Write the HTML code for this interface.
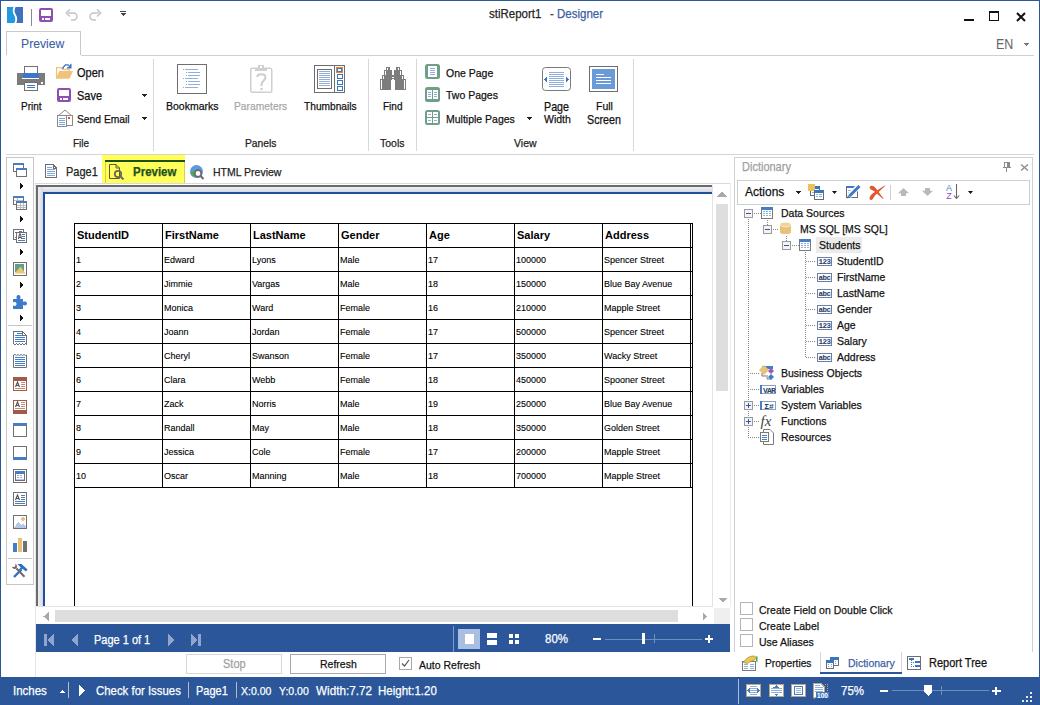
<!DOCTYPE html><html><head><meta charset="utf-8"><style>
html,body{margin:0;padding:0;}
body{width:1040px;height:705px;position:relative;overflow:hidden;background:#fff;font-family:"Liberation Sans",sans-serif;}
.t{position:absolute;white-space:pre;line-height:1;-webkit-text-stroke:0.25px currentColor;}
svg{display:block}
</style></head><body>
<div style="position:absolute;left:0px;top:0px;width:1040px;height:1px;background:#2b579a"></div>
<div style="position:absolute;left:0px;top:0px;width:1px;height:705px;background:#2b579a"></div>
<div style="position:absolute;left:1039px;top:0px;width:1px;height:705px;background:#2b579a"></div>
<svg style="position:absolute;left:7px;top:7px;" width="16" height="16" viewBox="0 0 16 16"><rect x="0" y="0" width="16" height="16" fill="#2399e0"/><path d="M8 0 H16 V16 H8.5 C11 13 10.5 11 9 8.5 C7.5 6 6.5 3 8 0 Z" fill="#3f72ba"/><path d="M7.8 -0.5 C6.2 2.5 6.2 5 7.8 7.5 C9.6 10.5 10 13 8 16.5" stroke="#fff" stroke-width="1.8" fill="none"/></svg>
<div style="position:absolute;left:31px;top:9px;width:1px;height:17px;background:#8a8a8a"></div>
<svg style="position:absolute;left:39px;top:8px;" width="14" height="14" viewBox="0 0 14 14" shape-rendering="crispEdges"><rect x="0" y="0" width="14" height="14" rx="2" fill="#8e4fb4" shape-rendering="auto"/><rect x="2" y="2" width="10" height="6" fill="#fff"/><rect x="3" y="10" width="8" height="2" fill="#fff"/><rect x="5" y="10" width="1" height="2" fill="#8e4fb4"/></svg>
<svg style="position:absolute;left:65px;top:9px;" width="13" height="12" viewBox="0 0 13 12"><path d="M3 4 H8.5 A3.5 3.5 0 0 1 8.5 11 H6" stroke="#c4c4c4" stroke-width="1.5" fill="none"/><path d="M1 4 L5 0.5 M1 4 L5 7.5" stroke="#c4c4c4" stroke-width="1.5" fill="none"/></svg>
<svg style="position:absolute;left:89px;top:9px;" width="13" height="12" viewBox="0 0 13 12"><path d="M10 4 H4.5 A3.5 3.5 0 0 0 4.5 11 H7" stroke="#c4c4c4" stroke-width="1.5" fill="none"/><path d="M12 4 L8 0.5 M12 4 L8 7.5" stroke="#c4c4c4" stroke-width="1.5" fill="none"/></svg>
<svg style="position:absolute;left:120px;top:11px;" width="6" height="6" viewBox="0 0 6 6" shape-rendering="crispEdges"><rect x="0" y="0" width="6" height="1" fill="#444"/><path d="M0 2 H6 L3 5 Z" fill="#444"/></svg>
<div class="t" style="left:489px;top:8.00px;font-size:12.88px;color:#222;font-weight:normal;transform:scaleX(0.8929);transform-origin:0 0;">stiReport1</div>
<div class="t" style="left:550px;top:8.00px;font-size:12.88px;color:#444;font-weight:normal;transform:scaleX(0.8929);transform-origin:0 0;">- <span style="color:#3b5ea6">Designer</span></div>
<div style="position:absolute;left:964px;top:19px;width:10px;height:2px;background:#111"></div>
<svg style="position:absolute;left:989px;top:11px;" width="10" height="10" viewBox="0 0 10 10" shape-rendering="crispEdges"><rect x="0.5" y="0.5" width="9" height="9" fill="none" stroke="#111"/><rect x="0" y="0" width="10" height="2" fill="#111"/></svg>
<svg style="position:absolute;left:1016px;top:12px;" width="10" height="10" viewBox="0 0 10 10"><path d="M1 1 L9 9 M9 1 L1 9" stroke="#111" stroke-width="2"/></svg>
<div style="position:absolute;left:6px;top:31px;width:75px;height:24px;border:1px solid #c9c9c9;border-bottom:none;background:#fff;box-sizing:border-box"></div>
<div class="t" style="left:21px;top:37.00px;font-size:13.66px;color:#3b5ea6;font-weight:normal;transform:scaleX(0.8929);transform-origin:0 0;-webkit-text-stroke:0.1px #3b5ea6;">Preview</div>
<div style="position:absolute;left:81px;top:55px;width:953px;height:1px;background:#d0d0d0"></div>
<div class="t" style="left:995.5px;top:37.00px;font-size:14.0px;color:#666;font-weight:normal;transform:scaleX(0.8929);transform-origin:0 0;-webkit-text-stroke:0;">EN</div>
<svg style="position:absolute;left:1024px;top:43px;" width="6" height="3" viewBox="0 0 6 3" shape-rendering="crispEdges"><path d="M0 0 H5 L2.5 3 Z" fill="#777"/></svg>
<div style="position:absolute;left:6px;top:154px;width:1028px;height:1px;background:#d4d4d4"></div>
<div style="position:absolute;left:153px;top:59px;width:1px;height:92px;background:#d9d9d9"></div>
<div style="position:absolute;left:368px;top:59px;width:1px;height:92px;background:#d9d9d9"></div>
<div style="position:absolute;left:416px;top:59px;width:1px;height:92px;background:#d9d9d9"></div>
<div style="position:absolute;left:633px;top:59px;width:1px;height:92px;background:#d9d9d9"></div>
<svg style="position:absolute;left:17px;top:66px;" width="28" height="25" viewBox="0 0 28 25" shape-rendering="crispEdges"><rect x="7.5" y="0.5" width="13" height="8" fill="#fff" stroke="#707070"/><rect x="0" y="7" width="28" height="12" fill="#7b7b7b"/><rect x="6" y="7" width="16" height="5" fill="#3d78c8"/><rect x="5" y="12" width="17" height="1" fill="#fff"/><rect x="24" y="16" width="2" height="2" fill="#fff"/><rect x="7.5" y="16.5" width="13" height="8" fill="#fff" stroke="#707070"/><rect x="10" y="19" width="8" height="1" fill="#3d78c8"/><rect x="10" y="21" width="8" height="1" fill="#3d78c8"/></svg>
<div class="t" style="left:20.5px;top:101.00px;font-size:11.2px;color:#111;font-weight:normal;transform:scaleX(0.8929);transform-origin:0 0;">Print</div>
<svg style="position:absolute;left:55px;top:63px;" width="18" height="17" viewBox="0 0 18 17"><path d="M1.6 15.5 V4.6 H6 L8 6.6 H14.4 V8.5" fill="#fff" stroke="#f0c27a" stroke-width="1.3"/><path d="M4.2 8 H18 L14.5 15.8 H1 Z" fill="#f0c27a"/><path d="M8 6 V4.5 L10.5 1.8 H13 L15 3.8" fill="none" stroke="#3a6fc0" stroke-width="1.3"/><path d="M16.5 0.5 V5.5 H11.5 L12.5 4 H15 V1.5 Z" fill="#3a6fc0"/></svg>
<div class="t" style="left:77px;top:67.00px;font-size:12.32px;color:#111;font-weight:normal;transform:scaleX(0.8929);transform-origin:0 0;">Open</div>
<svg style="position:absolute;left:57px;top:88px;" width="14" height="14" viewBox="0 0 14 14" shape-rendering="crispEdges"><rect x="0" y="0" width="14" height="14" rx="2" fill="#8e4fb4" shape-rendering="auto"/><rect x="2" y="2" width="10" height="6" fill="#fff"/><rect x="3" y="10" width="8" height="2" fill="#fff"/><rect x="5" y="10" width="1" height="2" fill="#8e4fb4"/></svg>
<div class="t" style="left:77px;top:90.00px;font-size:12.32px;color:#111;font-weight:normal;transform:scaleX(0.8929);transform-origin:0 0;">Save</div>
<svg style="position:absolute;left:57px;top:109px;" width="16" height="18" viewBox="0 0 16 18" shape-rendering="crispEdges"><path d="M1 7 L8 1 L15 7" fill="none" stroke="#8a8a8a" stroke-width="1" shape-rendering="auto"/><rect x="0.5" y="6.5" width="15" height="10" fill="#fff" stroke="#8a8a8a"/><rect x="0.5" y="6.5" width="9" height="11" fill="#fff" stroke="#8a8a8a"/><g fill="#7fa6d8"><rect x="2" y="9" width="6" height="1"/><rect x="2" y="11" width="6" height="1"/><rect x="2" y="13" width="6" height="1"/><rect x="2" y="15" width="6" height="1"/></g><rect x="11" y="8" width="2" height="2" fill="#e8501e"/></svg>
<div class="t" style="left:77px;top:114.00px;font-size:11.54px;color:#111;font-weight:normal;transform:scaleX(0.8929);transform-origin:0 0;">Send Email</div>
<svg style="position:absolute;left:141px;top:94px;" width="6" height="3" viewBox="0 0 6 3" shape-rendering="crispEdges"><path d="M0 0 H6 L3 3 Z" fill="#222"/></svg>
<svg style="position:absolute;left:141px;top:117px;" width="6" height="3" viewBox="0 0 6 3" shape-rendering="crispEdges"><path d="M0 0 H6 L3 3 Z" fill="#222"/></svg>
<div class="t" style="left:72.5px;top:138.00px;font-size:11.2px;color:#222;font-weight:normal;transform:scaleX(0.8929);transform-origin:0 0;">File</div>
<svg style="position:absolute;left:177px;top:64px;" width="30" height="30" viewBox="0 0 30 30" shape-rendering="crispEdges"><rect x="0.5" y="0.5" width="29" height="29" fill="#fff" stroke="#6e6e6e"/><g fill="#8fa8cc"><rect x="6" y="5" width="1" height="1"/><rect x="9" y="8" width="1" height="1"/><rect x="9" y="11" width="1" height="1"/><rect x="6" y="14" width="1" height="1"/><rect x="9" y="17" width="1" height="1"/><rect x="9" y="20" width="1" height="1"/><rect x="6" y="23" width="1" height="1"/></g><g fill="#8fb0dc"><rect x="8" y="5" width="13" height="1"/><rect x="11" y="8" width="12" height="1"/><rect x="11" y="11" width="12" height="1"/><rect x="8" y="14" width="13" height="1"/><rect x="11" y="17" width="12" height="1"/><rect x="11" y="20" width="12" height="1"/><rect x="8" y="23" width="13" height="1"/></g></svg>
<div class="t" style="left:165.5px;top:100.00px;font-size:11.76px;color:#111;font-weight:normal;transform:scaleX(0.8929);transform-origin:0 0;">Bookmarks</div>
<svg style="position:absolute;left:250px;top:64px;" width="23" height="30" viewBox="0 0 23 30"><rect x="0.75" y="4.25" width="21" height="24" rx="1.5" fill="#fff" stroke="#d0d0d0" stroke-width="1.5"/><rect x="5" y="4" width="12" height="3" fill="#d0d0d0"/><rect x="8" y="1" width="6" height="4" fill="#d0d0d0"/><rect x="10" y="2" width="2" height="2" fill="#fff"/><path d="M7.3 13 C7.3 9.5 15.5 9 15.5 13.5 C15.5 16.5 11.5 17 11.5 20.5 V22" fill="none" stroke="#cdcdcd" stroke-width="2"/><circle cx="11.5" cy="25" r="1.3" fill="#cdcdcd"/></svg>
<div class="t" style="left:234px;top:101.00px;font-size:11.54px;color:#a8a8a8;font-weight:normal;transform:scaleX(0.8929);transform-origin:0 0;">Parameters</div>
<svg style="position:absolute;left:314px;top:65px;" width="31" height="28" viewBox="0 0 31 28" shape-rendering="crispEdges"><rect x="0.5" y="0.5" width="30" height="27" fill="#fff" stroke="#6e6e6e"/><rect x="3.5" y="4.5" width="14" height="19" fill="#fff" stroke="#6e6e6e"/><g fill="#8fb0dc"><rect x="5" y="6" width="11" height="1"/><rect x="5" y="8" width="11" height="1"/><rect x="5" y="10" width="11" height="1"/><rect x="5" y="12" width="11" height="1"/><rect x="5" y="14" width="11" height="1"/><rect x="5" y="16" width="11" height="1"/><rect x="5" y="18" width="11" height="1"/><rect x="5" y="20" width="11" height="1"/><rect x="5" y="22" width="11" height="0"/></g><rect x="20" y="0" width="1" height="28" fill="#6e6e6e"/><rect x="22" y="2" width="7" height="6" fill="#e8842a"/><rect x="23" y="3" width="5" height="4" fill="#3d74c0"/><rect x="24" y="4" width="3" height="2" fill="#fff"/><rect x="23.5" y="9.5" width="5" height="4" fill="none" stroke="#3d74c0"/><rect x="23.5" y="15.5" width="5" height="4" fill="none" stroke="#3d74c0"/><rect x="23.5" y="21.5" width="5" height="4" fill="none" stroke="#3d74c0"/></svg>
<div class="t" style="left:303.5px;top:101.00px;font-size:11.42px;color:#111;font-weight:normal;transform:scaleX(0.8929);transform-origin:0 0;">Thumbnails</div>
<div class="t" style="left:245px;top:138.00px;font-size:11.54px;color:#222;font-weight:normal;transform:scaleX(0.8929);transform-origin:0 0;">Panels</div>
<svg style="position:absolute;left:380px;top:67px;" width="27" height="23" viewBox="0 0 27 23" shape-rendering="crispEdges"><g fill="#7d7d7d"><rect x="6" y="0" width="4" height="4"/><rect x="4" y="3" width="8" height="6"/><rect x="2" y="8" width="10" height="5"/><rect x="0" y="12" width="11" height="11"/><rect x="16" y="0" width="4" height="4"/><rect x="14" y="3" width="8" height="6"/><rect x="14" y="8" width="10" height="5"/><rect x="15" y="12" width="11" height="11"/><rect x="11" y="8" width="4" height="4"/></g><g fill="#fff"><rect x="7" y="1" width="1" height="2"/><rect x="5" y="4" width="1" height="4"/><rect x="3" y="9" width="1" height="3"/><rect x="1" y="13" width="1" height="9"/><rect x="18" y="1" width="1" height="2"/><rect x="20" y="4" width="1" height="4"/><rect x="22" y="9" width="1" height="3"/><rect x="24" y="13" width="1" height="9"/><rect x="12" y="10" width="2" height="1"/></g></svg>
<div class="t" style="left:382.5px;top:101.00px;font-size:11.2px;color:#111;font-weight:normal;transform:scaleX(0.8929);transform-origin:0 0;">Find</div>
<div class="t" style="left:380px;top:137.00px;font-size:11.76px;color:#222;font-weight:normal;transform:scaleX(0.8929);transform-origin:0 0;">Tools</div>
<svg style="position:absolute;left:425px;top:64px;" width="15" height="15" viewBox="0 0 15 15" shape-rendering="crispEdges"><rect x="0" y="0" width="15" height="15" rx="2.5" fill="#6f9e89" shape-rendering="auto"/><rect x="3" y="2" width="9" height="11" fill="#fff"/><g fill="#8fb0dc"><rect x="5" y="4" width="5" height="1"/><rect x="5" y="6" width="5" height="1"/><rect x="5" y="8" width="5" height="1"/><rect x="5" y="10" width="5" height="1"/></g></svg>
<div class="t" style="left:445.5px;top:67.00px;font-size:11.76px;color:#111;font-weight:normal;transform:scaleX(0.8929);transform-origin:0 0;">One Page</div>
<svg style="position:absolute;left:425px;top:87px;" width="15" height="15" viewBox="0 0 15 15" shape-rendering="crispEdges"><rect x="0" y="0" width="15" height="15" rx="2.5" fill="#6f9e89" shape-rendering="auto"/><rect x="2" y="3" width="5" height="9" fill="#fff"/><rect x="8" y="3" width="5" height="9" fill="#fff"/><g fill="#8fb0dc"><rect x="3" y="5" width="3" height="1"/><rect x="3" y="7" width="3" height="1"/><rect x="3" y="9" width="3" height="1"/><rect x="9" y="5" width="3" height="1"/><rect x="9" y="7" width="3" height="1"/><rect x="9" y="9" width="3" height="1"/></g></svg>
<div class="t" style="left:445.5px;top:89.00px;font-size:11.76px;color:#111;font-weight:normal;transform:scaleX(0.8929);transform-origin:0 0;">Two Pages</div>
<svg style="position:absolute;left:425px;top:110px;" width="15" height="15" viewBox="0 0 15 15" shape-rendering="crispEdges"><rect x="0" y="0" width="15" height="15" rx="2.5" fill="#6f9e89" shape-rendering="auto"/><rect x="2" y="2" width="5" height="5" fill="#fff"/><rect x="8" y="2" width="5" height="5" fill="#fff"/><rect x="2" y="8" width="5" height="5" fill="#fff"/><rect x="8" y="8" width="5" height="5" fill="#fff"/><g fill="#8fb0dc"><rect x="3" y="4" width="3" height="1"/><rect x="9" y="4" width="3" height="1"/><rect x="3" y="10" width="3" height="1"/><rect x="9" y="10" width="3" height="1"/></g></svg>
<div class="t" style="left:446px;top:112.50px;font-size:11.76px;color:#111;font-weight:normal;transform:scaleX(0.8929);transform-origin:0 0;">Multiple Pages</div>
<svg style="position:absolute;left:526px;top:117px;" width="6" height="3" viewBox="0 0 6 3" shape-rendering="crispEdges"><path d="M0 0 H6 L3 3 Z" fill="#222"/></svg>
<svg style="position:absolute;left:542px;top:67px;" width="29" height="24" viewBox="0 0 29 24" shape-rendering="crispEdges"><rect x="0.5" y="0.5" width="28" height="23" rx="3" fill="#fff" stroke="#7a7a7a" shape-rendering="auto"/><g fill="#8fb0dc"><rect x="7" y="5" width="15" height="1"/><rect x="7" y="7" width="15" height="1"/><rect x="7" y="9" width="15" height="1"/><rect x="7" y="11" width="15" height="1"/><rect x="7" y="13" width="15" height="1"/><rect x="7" y="15" width="15" height="1"/><rect x="7" y="17" width="15" height="1"/><rect x="7" y="19" width="15" height="1"/></g><g fill="#3d74c0"><rect x="2" y="12" width="1" height="1"/><rect x="3" y="11" width="1" height="3"/><rect x="4" y="10" width="1" height="5"/><rect x="24" y="10" width="1" height="5"/><rect x="25" y="11" width="1" height="3"/><rect x="26" y="12" width="1" height="1"/></g></svg>
<div class="t" style="left:544px;top:101.00px;font-size:11.98px;color:#111;font-weight:normal;transform:scaleX(0.8929);transform-origin:0 0;">Page</div>
<div class="t" style="left:543.5px;top:113.00px;font-size:11.76px;color:#111;font-weight:normal;transform:scaleX(0.8929);transform-origin:0 0;">Width</div>
<svg style="position:absolute;left:589px;top:66px;" width="29" height="26" viewBox="0 0 29 26" shape-rendering="crispEdges"><rect x="0.5" y="0.5" width="28" height="25" fill="#fff" stroke="#6e6e6e"/><rect x="3" y="3" width="23" height="20" fill="#6a9bd8"/><g fill="#fff"><rect x="7" y="8" width="8" height="1"/><rect x="7" y="11" width="15" height="1"/><rect x="7" y="14" width="15" height="1"/><rect x="7" y="17" width="15" height="1"/></g></svg>
<div class="t" style="left:596px;top:100.00px;font-size:11.76px;color:#111;font-weight:normal;transform:scaleX(0.8929);transform-origin:0 0;">Full</div>
<div class="t" style="left:587px;top:114.00px;font-size:11.98px;color:#111;font-weight:normal;transform:scaleX(0.8929);transform-origin:0 0;">Screen</div>
<div class="t" style="left:514px;top:137.00px;font-size:11.76px;color:#222;font-weight:normal;transform:scaleX(0.8929);transform-origin:0 0;">View</div>
<svg style="position:absolute;left:45px;top:164px;" width="12" height="14" viewBox="0 0 12 14" shape-rendering="crispEdges"><path d="M0.5 0.5 H8 L11.5 4 V13.5 H0.5 Z" fill="#fff" stroke="#6e6e6e"/><path d="M8 0.5 V4 H11.5" fill="none" stroke="#6e6e6e"/><g fill="#7fa6d8"><rect x="2" y="3" width="5" height="1"/><rect x="2" y="5" width="8" height="1"/><rect x="2" y="7" width="8" height="1"/><rect x="2" y="9" width="8" height="1"/><rect x="2" y="11" width="8" height="1"/></g></svg>
<div class="t" style="left:66px;top:166.00px;font-size:12.32px;color:#222;font-weight:normal;transform:scaleX(0.8929);transform-origin:0 0;">Page1</div>
<div style="position:absolute;left:102px;top:155px;width:83px;height:29px;background:#ffff58"></div>
<div style="position:absolute;left:105px;top:160px;width:80px;height:2px;background:#1d4f1d"></div>
<div style="position:absolute;left:105px;top:162px;width:1px;height:22px;background:#d6d04a"></div>
<div style="position:absolute;left:184px;top:162px;width:1px;height:22px;background:#d6d04a"></div>
<svg style="position:absolute;left:109px;top:164px;" width="16" height="16" viewBox="0 0 16 16"><path d="M0.5 0.5 H7 L10.5 4 V14.5 H0.5 Z" fill="none" stroke="#5a5a2a"/><path d="M7 0.5 V4 H10.5" fill="none" stroke="#5a5a2a"/><circle cx="9" cy="10" r="3.2" fill="none" stroke="#6a6a5a" stroke-width="1.8"/><path d="M11.3 12.3 L14.5 15.5" stroke="#6a6a5a" stroke-width="2"/></svg>
<div class="t" style="left:133px;top:166.00px;font-size:12.88px;color:#1d4f1d;font-weight:bold;transform:scaleX(0.8929);transform-origin:0 0;">Preview</div>
<svg style="position:absolute;left:190px;top:165px;" width="15" height="15" viewBox="0 0 15 15"><circle cx="6.5" cy="6.5" r="6.5" fill="#5b9ad8"/><path d="M0.5 8 C2 6 4 6 5 8 L4 12 C2 11 0.8 10 0.5 8Z" fill="#4caa4c"/><circle cx="8" cy="8.5" r="3.3" fill="#fff" stroke="#6a6a6a" stroke-width="1.8"/><path d="M10.3 10.8 L13.5 14" stroke="#6a6a6a" stroke-width="2"/></svg>
<div class="t" style="left:213px;top:166.00px;font-size:11.76px;color:#222;font-weight:normal;transform:scaleX(0.8929);transform-origin:0 0;">HTML Preview</div>
<div style="position:absolute;left:6px;top:157px;width:28px;height:428px;border:1px solid #c6c6c6;box-sizing:border-box;background:#fff"></div>
<svg style="position:absolute;left:13px;top:163px;" width="15" height="14" viewBox="0 0 15 14" shape-rendering="crispEdges"><rect x="0.5" y="0.5" width="10" height="8" fill="#fff" stroke="#707070"/><rect x="0" y="0" width="11" height="2" fill="#4a7cc0"/><rect x="3.5" y="5.5" width="10" height="8" fill="#fff" stroke="#707070"/><rect x="3" y="5" width="11" height="2" fill="#4a7cc0"/></svg>
<svg style="position:absolute;left:20px;top:183px;" width="4" height="6" viewBox="0 0 4 6" shape-rendering="crispEdges"><path d="M0 0 L4 3 L0 6 Z" fill="#111"/></svg>
<svg style="position:absolute;left:13px;top:196px;" width="15" height="14" viewBox="0 0 15 14" shape-rendering="crispEdges"><rect x="0.5" y="0.5" width="10" height="8" fill="#fff" stroke="#707070"/><rect x="0" y="0" width="11" height="2" fill="#4a7cc0"/><rect x="1" y="4" width="9" height="1" fill="#bbb"/><rect x="4" y="2" width="1" height="6" fill="#bbb"/><rect x="3.5" y="5.5" width="10" height="8" fill="#fff" stroke="#707070"/><rect x="3" y="5" width="11" height="2" fill="#4a7cc0"/><rect x="4" y="9" width="9" height="1" fill="#bbb"/><rect x="4" y="11" width="9" height="1" fill="#bbb"/><rect x="7" y="7" width="1" height="6" fill="#bbb"/><rect x="10" y="7" width="1" height="6" fill="#bbb"/></svg>
<svg style="position:absolute;left:20px;top:216px;" width="4" height="6" viewBox="0 0 4 6" shape-rendering="crispEdges"><path d="M0 0 L4 3 L0 6 Z" fill="#111"/></svg>
<svg style="position:absolute;left:13px;top:229px;" width="14" height="14" viewBox="0 0 14 14" shape-rendering="crispEdges"><rect x="0.5" y="0.5" width="10" height="10" fill="#fff" stroke="#707070"/><rect x="6" y="2" width="3" height="1" fill="#4a7cc0"/><rect x="2" y="3" width="2" height="1" fill="#4a7cc0"/><rect x="2" y="8" width="1" height="1" fill="#4a7cc0"/><rect x="3.5" y="3.5" width="10" height="10" fill="#fff" stroke="#707070"/><path d="M5.5 10 L6.5 5 H7.5 L8.5 10 M6 8.5 H8" stroke="#555" stroke-width="1.1" fill="none" shape-rendering="auto"/><rect x="9" y="5" width="3" height="1" fill="#4a7cc0"/><rect x="9" y="7" width="3" height="1" fill="#4a7cc0"/><rect x="9" y="9" width="3" height="1" fill="#4a7cc0"/><rect x="5" y="11" width="7" height="1" fill="#4a7cc0"/></svg>
<svg style="position:absolute;left:20px;top:249px;" width="4" height="6" viewBox="0 0 4 6" shape-rendering="crispEdges"><path d="M0 0 L4 3 L0 6 Z" fill="#111"/></svg>
<svg style="position:absolute;left:13px;top:262px;" width="14" height="14" viewBox="0 0 14 14" shape-rendering="crispEdges"><rect x="0.5" y="0.5" width="13" height="13" fill="#fff" stroke="#707070"/><rect x="2" y="2" width="9" height="8" fill="#5fa08a"/><path d="M1.5 11.5 L7.5 4.5 L12.5 11.5 Z" fill="#eec46e" shape-rendering="auto"/></svg>
<svg style="position:absolute;left:20px;top:282px;" width="4" height="6" viewBox="0 0 4 6" shape-rendering="crispEdges"><path d="M0 0 L4 3 L0 6 Z" fill="#111"/></svg>
<svg style="position:absolute;left:13px;top:295px;" width="14" height="14" viewBox="0 0 14 14"><path d="M0 4 H4 C3 2.5 3.5 0 5.5 0 C7.5 0 8 2.5 7 4 H10 V7 C11.5 6 14 6.5 14 8.5 C14 10.5 11.5 11 10 10 V14 H0 V10.5 C1.5 11.5 3.5 11 3.5 9 C3.5 7 1.5 6.5 0 7.5 Z" fill="#3d7cc9"/></svg>
<svg style="position:absolute;left:20px;top:315px;" width="4" height="6" viewBox="0 0 4 6" shape-rendering="crispEdges"><path d="M0 0 L4 3 L0 6 Z" fill="#111"/></svg>
<div style="position:absolute;left:8px;top:325px;width:24px;height:1px;background:#c6c6c6"></div>
<svg style="position:absolute;left:13px;top:331px;shape-rendering:crispEdges" width="14" height="14" viewBox="0 0 14 14"><path d="M0.5 0.5 H9.5 L13.5 4.5 V13 L12.5 12.5 L11 13.5 L9.5 12.5 L8 13.5 L6.5 12.5 L5 13.5 L3.5 12.5 L2 13.5 L0.5 12.5 Z" fill="#fff" stroke="#707070"/><path d="M9.5 0.5 V4.5 H13.5" fill="none" stroke="#707070"/><rect x="4" y="2" width="5" height="1" fill="#3f7fd0"/><rect x="2" y="4" width="7" height="1" fill="#3f7fd0"/><rect x="2" y="6" width="10" height="1" fill="#3f7fd0"/><rect x="2" y="8" width="10" height="1" fill="#3f7fd0"/><rect x="2" y="10" width="10" height="1" fill="#3f7fd0"/></svg>
<svg style="position:absolute;left:13px;top:354px;" width="14" height="14" viewBox="0 0 14 14"><path d="M0.5 1 L2 0.5 L3.5 1.5 L5 0.5 L6.5 1.5 L8 0.5 L9.5 1.5 L11 0.5 L12.5 1.5 L13.5 1 V13.5 H0.5 Z" fill="#fff" stroke="#707070"/><rect x="2" y="3" width="10" height="1" fill="#3f7fd0"/><rect x="2" y="5" width="10" height="1" fill="#3f7fd0"/><rect x="2" y="7" width="10" height="1" fill="#3f7fd0"/><rect x="2" y="9" width="10" height="1" fill="#3f7fd0"/><rect x="2" y="11" width="10" height="1" fill="#3f7fd0"/></svg>
<svg style="position:absolute;left:13px;top:377px;" width="14" height="14" viewBox="0 0 14 14" shape-rendering="crispEdges"><rect x="0.5" y="0.5" width="13" height="13" fill="#fff" stroke="#a45a48"/><rect x="0" y="0" width="14" height="4" fill="#a45a48"/><path d="M2.5 10 L4.5 5 L6.5 10 M3.2 8.5 H5.8" stroke="#555" stroke-width="1.2" fill="none" shape-rendering="auto"/><rect x="8" y="5" width="4" height="1" fill="#c98a7a"/><rect x="8" y="7" width="4" height="1" fill="#c98a7a"/><rect x="8" y="9" width="4" height="1" fill="#c98a7a"/><rect x="2" y="11" width="10" height="1" fill="#c98a7a"/></svg>
<svg style="position:absolute;left:13px;top:400px;" width="14" height="14" viewBox="0 0 14 14" shape-rendering="crispEdges"><rect x="0.5" y="0.5" width="13" height="13" fill="#fff" stroke="#a45a48"/><rect x="0" y="10" width="14" height="4" fill="#a45a48"/><path d="M2.5 7 L4.5 2 L6.5 7 M3.2 5.5 H5.8" stroke="#555" stroke-width="1.2" fill="none" shape-rendering="auto"/><rect x="8" y="2" width="4" height="1" fill="#c98a7a"/><rect x="8" y="4" width="4" height="1" fill="#c98a7a"/><rect x="8" y="6" width="4" height="1" fill="#c98a7a"/><rect x="2" y="8" width="10" height="1" fill="#c98a7a"/></svg>
<svg style="position:absolute;left:13px;top:423px;" width="14" height="14" viewBox="0 0 14 14" shape-rendering="crispEdges"><rect x="0.5" y="0.5" width="13" height="13" fill="#fff" stroke="#707070"/><rect x="0" y="0" width="14" height="3" fill="#4a7cc0"/></svg>
<svg style="position:absolute;left:13px;top:446px;" width="14" height="14" viewBox="0 0 14 14" shape-rendering="crispEdges"><rect x="0.5" y="0.5" width="13" height="13" fill="#fff" stroke="#707070"/><rect x="0" y="11" width="14" height="3" fill="#4a7cc0"/></svg>
<svg style="position:absolute;left:13px;top:469px;" width="14" height="14" viewBox="0 0 14 14" shape-rendering="crispEdges"><rect x="0.5" y="0.5" width="13" height="13" fill="#fff" stroke="#707070"/><rect x="2.5" y="2.5" width="9" height="9" fill="#fff" stroke="#707070"/><rect x="2" y="2" width="10" height="3" fill="#4a7cc0"/><rect x="4" y="6" width="2" height="1" fill="#8fb0dc"/><rect x="7" y="6" width="2" height="1" fill="#8fb0dc"/><rect x="4" y="8" width="2" height="1" fill="#8fb0dc"/><rect x="7" y="8" width="2" height="1" fill="#8fb0dc"/><rect x="3" y="10" width="8" height="1" fill="#b5c9e6"/></svg>
<svg style="position:absolute;left:13px;top:492px;" width="14" height="14" viewBox="0 0 14 14" shape-rendering="crispEdges"><rect x="0.5" y="0.5" width="13" height="13" fill="#fff" stroke="#707070"/><path d="M2.5 8 L4.5 3 L6.5 8 M3.2 6.5 H5.8" stroke="#555" stroke-width="1.2" fill="none" shape-rendering="auto"/><rect x="8" y="3" width="4" height="1" fill="#4a7cc0"/><rect x="8" y="5" width="4" height="1" fill="#4a7cc0"/><rect x="8" y="7" width="4" height="1" fill="#4a7cc0"/><rect x="2" y="9" width="10" height="1" fill="#4a7cc0"/><rect x="2" y="11" width="10" height="1" fill="#4a7cc0"/></svg>
<svg style="position:absolute;left:13px;top:515px;shape-rendering:crispEdges" width="14" height="14" viewBox="0 0 14 14"><rect x="0.5" y="0.5" width="13" height="13" fill="#fff" stroke="#707070"/><path d="M1 13 L5 7 L8 10 L10 8 L13 12 V13 Z" fill="#b5c9e6"/><circle cx="10" cy="4" r="1.8" fill="#e9c27a"/></svg>
<svg style="position:absolute;left:13px;top:538px;" width="14" height="14" viewBox="0 0 14 14" shape-rendering="crispEdges"><rect x="0" y="5" width="4" height="9" fill="#3f7fc8"/><rect x="5" y="0" width="4" height="14" fill="#e8c070"/><rect x="10" y="3" width="4" height="11" fill="#707070"/></svg>
<div style="position:absolute;left:8px;top:558px;width:24px;height:1px;background:#c6c6c6"></div>
<svg style="position:absolute;left:11px;top:563px;" width="17" height="15" viewBox="0 0 17 15"><path d="M10.5 6.5 L3 14" stroke="#2f6fc0" stroke-width="2.4"/><path d="M6.5 1 H10.5 L16.5 6.5 L15 8.5 L11.5 5.8 L9.5 7.8 L8 6.3 L9.8 4.5 Z" fill="#2f6fc0"/><path d="M5.5 5.5 L13.5 13.8" stroke="#6a6a6a" stroke-width="2"/><path d="M4.2 0.8 C6 1.5 6.5 4 5.5 5.5 C4 6.5 1.5 6 1 3.8 L3.3 4 L4.5 2.8 Z" fill="#6a6a6a"/></svg>
<div style="position:absolute;left:35px;top:183px;width:696px;height:1px;background:#d9d9d9"></div>
<div style="position:absolute;left:730px;top:183px;width:1px;height:424px;background:#ececec"></div>
<div style="position:absolute;left:35px;top:184px;width:1px;height:493px;background:#e6e6e6"></div>
<div style="position:absolute;left:36px;top:185px;width:676px;height:2px;background:#6b6b6b"></div>
<div style="position:absolute;left:36px;top:185px;width:2px;height:422px;background:#6b6b6b"></div>
<div style="position:absolute;left:38px;top:187px;width:674px;height:5px;background:linear-gradient(#eceef2,#dfe3ea 60%,#d2d6dd)"></div>
<div style="position:absolute;left:38px;top:187px;width:5px;height:420px;background:linear-gradient(90deg,#eceef2,#dfe3ea 60%,#d2d6dd)"></div>
<div style="position:absolute;left:43px;top:192px;width:669px;height:2px;background:#1f4e9e"></div>
<div style="position:absolute;left:43px;top:192px;width:2px;height:415px;background:#1f4e9e"></div>
<div style="position:absolute;left:45px;top:194px;width:667px;height:413px;background:#fff"></div>
<div style="position:absolute;left:74px;top:223px;width:1px;height:384px;background:#000"></div>
<div style="position:absolute;left:692px;top:223px;width:1px;height:384px;background:#000"></div>
<div style="position:absolute;left:74px;top:223px;width:619px;height:1px;background:#000"></div>
<div style="position:absolute;left:74px;top:247px;width:619px;height:1px;background:#000"></div>
<div style="position:absolute;left:74px;top:271px;width:619px;height:1px;background:#000"></div>
<div style="position:absolute;left:74px;top:295px;width:619px;height:1px;background:#000"></div>
<div style="position:absolute;left:74px;top:319px;width:619px;height:1px;background:#000"></div>
<div style="position:absolute;left:74px;top:343px;width:619px;height:1px;background:#000"></div>
<div style="position:absolute;left:74px;top:367px;width:619px;height:1px;background:#000"></div>
<div style="position:absolute;left:74px;top:391px;width:619px;height:1px;background:#000"></div>
<div style="position:absolute;left:74px;top:415px;width:619px;height:1px;background:#000"></div>
<div style="position:absolute;left:74px;top:439px;width:619px;height:1px;background:#000"></div>
<div style="position:absolute;left:74px;top:463px;width:619px;height:1px;background:#000"></div>
<div style="position:absolute;left:74px;top:487px;width:619px;height:1px;background:#000"></div>
<div style="position:absolute;left:74px;top:223px;width:1px;height:265px;background:#000"></div>
<div style="position:absolute;left:162px;top:223px;width:1px;height:265px;background:#000"></div>
<div style="position:absolute;left:250px;top:223px;width:1px;height:265px;background:#000"></div>
<div style="position:absolute;left:338px;top:223px;width:1px;height:265px;background:#000"></div>
<div style="position:absolute;left:426px;top:223px;width:1px;height:265px;background:#000"></div>
<div style="position:absolute;left:514px;top:223px;width:1px;height:265px;background:#000"></div>
<div style="position:absolute;left:602px;top:223px;width:1px;height:265px;background:#000"></div>
<div style="position:absolute;left:690px;top:223px;width:1px;height:265px;background:#000"></div>
<div class="t" style="left:77px;top:230.00px;font-size:11.0px;color:#000;font-weight:bold;-webkit-text-stroke:0;">StudentID</div>
<div class="t" style="left:165px;top:230.00px;font-size:11.0px;color:#000;font-weight:bold;-webkit-text-stroke:0;">FirstName</div>
<div class="t" style="left:253px;top:230.00px;font-size:11.0px;color:#000;font-weight:bold;-webkit-text-stroke:0;">LastName</div>
<div class="t" style="left:341px;top:230.00px;font-size:11.0px;color:#000;font-weight:bold;-webkit-text-stroke:0;">Gender</div>
<div class="t" style="left:429px;top:230.00px;font-size:11.0px;color:#000;font-weight:bold;-webkit-text-stroke:0;">Age</div>
<div class="t" style="left:517px;top:230.00px;font-size:11.0px;color:#000;font-weight:bold;-webkit-text-stroke:0;">Salary</div>
<div class="t" style="left:605px;top:230.00px;font-size:11.0px;color:#000;font-weight:bold;-webkit-text-stroke:0;">Address</div>
<div class="t" style="left:76px;top:255.00px;font-size:9.72px;color:#000;font-weight:normal;transform:scaleX(0.9259);transform-origin:0 0;-webkit-text-stroke:0.1px #000;">1</div>
<div class="t" style="left:164px;top:255.00px;font-size:9.72px;color:#000;font-weight:normal;transform:scaleX(0.9259);transform-origin:0 0;-webkit-text-stroke:0.1px #000;">Edward</div>
<div class="t" style="left:252px;top:255.00px;font-size:9.72px;color:#000;font-weight:normal;transform:scaleX(0.9259);transform-origin:0 0;-webkit-text-stroke:0.1px #000;">Lyons</div>
<div class="t" style="left:340px;top:255.00px;font-size:9.72px;color:#000;font-weight:normal;transform:scaleX(0.9259);transform-origin:0 0;-webkit-text-stroke:0.1px #000;">Male</div>
<div class="t" style="left:428px;top:255.00px;font-size:9.72px;color:#000;font-weight:normal;transform:scaleX(0.9259);transform-origin:0 0;-webkit-text-stroke:0.1px #000;">17</div>
<div class="t" style="left:516px;top:255.00px;font-size:9.72px;color:#000;font-weight:normal;transform:scaleX(0.9259);transform-origin:0 0;-webkit-text-stroke:0.1px #000;">100000</div>
<div class="t" style="left:604px;top:255.00px;font-size:9.72px;color:#000;font-weight:normal;transform:scaleX(0.9259);transform-origin:0 0;-webkit-text-stroke:0.1px #000;">Spencer Street</div>
<div class="t" style="left:76px;top:279.00px;font-size:9.72px;color:#000;font-weight:normal;transform:scaleX(0.9259);transform-origin:0 0;-webkit-text-stroke:0.1px #000;">2</div>
<div class="t" style="left:164px;top:279.00px;font-size:9.72px;color:#000;font-weight:normal;transform:scaleX(0.9259);transform-origin:0 0;-webkit-text-stroke:0.1px #000;">Jimmie</div>
<div class="t" style="left:252px;top:279.00px;font-size:9.72px;color:#000;font-weight:normal;transform:scaleX(0.9259);transform-origin:0 0;-webkit-text-stroke:0.1px #000;">Vargas</div>
<div class="t" style="left:340px;top:279.00px;font-size:9.72px;color:#000;font-weight:normal;transform:scaleX(0.9259);transform-origin:0 0;-webkit-text-stroke:0.1px #000;">Male</div>
<div class="t" style="left:428px;top:279.00px;font-size:9.72px;color:#000;font-weight:normal;transform:scaleX(0.9259);transform-origin:0 0;-webkit-text-stroke:0.1px #000;">18</div>
<div class="t" style="left:516px;top:279.00px;font-size:9.72px;color:#000;font-weight:normal;transform:scaleX(0.9259);transform-origin:0 0;-webkit-text-stroke:0.1px #000;">150000</div>
<div class="t" style="left:604px;top:279.00px;font-size:9.72px;color:#000;font-weight:normal;transform:scaleX(0.9259);transform-origin:0 0;-webkit-text-stroke:0.1px #000;">Blue Bay Avenue</div>
<div class="t" style="left:76px;top:303.00px;font-size:9.72px;color:#000;font-weight:normal;transform:scaleX(0.9259);transform-origin:0 0;-webkit-text-stroke:0.1px #000;">3</div>
<div class="t" style="left:164px;top:303.00px;font-size:9.72px;color:#000;font-weight:normal;transform:scaleX(0.9259);transform-origin:0 0;-webkit-text-stroke:0.1px #000;">Monica</div>
<div class="t" style="left:252px;top:303.00px;font-size:9.72px;color:#000;font-weight:normal;transform:scaleX(0.9259);transform-origin:0 0;-webkit-text-stroke:0.1px #000;">Ward</div>
<div class="t" style="left:340px;top:303.00px;font-size:9.72px;color:#000;font-weight:normal;transform:scaleX(0.9259);transform-origin:0 0;-webkit-text-stroke:0.1px #000;">Female</div>
<div class="t" style="left:428px;top:303.00px;font-size:9.72px;color:#000;font-weight:normal;transform:scaleX(0.9259);transform-origin:0 0;-webkit-text-stroke:0.1px #000;">16</div>
<div class="t" style="left:516px;top:303.00px;font-size:9.72px;color:#000;font-weight:normal;transform:scaleX(0.9259);transform-origin:0 0;-webkit-text-stroke:0.1px #000;">210000</div>
<div class="t" style="left:604px;top:303.00px;font-size:9.72px;color:#000;font-weight:normal;transform:scaleX(0.9259);transform-origin:0 0;-webkit-text-stroke:0.1px #000;">Mapple Street</div>
<div class="t" style="left:76px;top:327.00px;font-size:9.72px;color:#000;font-weight:normal;transform:scaleX(0.9259);transform-origin:0 0;-webkit-text-stroke:0.1px #000;">4</div>
<div class="t" style="left:164px;top:327.00px;font-size:9.72px;color:#000;font-weight:normal;transform:scaleX(0.9259);transform-origin:0 0;-webkit-text-stroke:0.1px #000;">Joann</div>
<div class="t" style="left:252px;top:327.00px;font-size:9.72px;color:#000;font-weight:normal;transform:scaleX(0.9259);transform-origin:0 0;-webkit-text-stroke:0.1px #000;">Jordan</div>
<div class="t" style="left:340px;top:327.00px;font-size:9.72px;color:#000;font-weight:normal;transform:scaleX(0.9259);transform-origin:0 0;-webkit-text-stroke:0.1px #000;">Female</div>
<div class="t" style="left:428px;top:327.00px;font-size:9.72px;color:#000;font-weight:normal;transform:scaleX(0.9259);transform-origin:0 0;-webkit-text-stroke:0.1px #000;">17</div>
<div class="t" style="left:516px;top:327.00px;font-size:9.72px;color:#000;font-weight:normal;transform:scaleX(0.9259);transform-origin:0 0;-webkit-text-stroke:0.1px #000;">500000</div>
<div class="t" style="left:604px;top:327.00px;font-size:9.72px;color:#000;font-weight:normal;transform:scaleX(0.9259);transform-origin:0 0;-webkit-text-stroke:0.1px #000;">Spencer Street</div>
<div class="t" style="left:76px;top:351.00px;font-size:9.72px;color:#000;font-weight:normal;transform:scaleX(0.9259);transform-origin:0 0;-webkit-text-stroke:0.1px #000;">5</div>
<div class="t" style="left:164px;top:351.00px;font-size:9.72px;color:#000;font-weight:normal;transform:scaleX(0.9259);transform-origin:0 0;-webkit-text-stroke:0.1px #000;">Cheryl</div>
<div class="t" style="left:252px;top:351.00px;font-size:9.72px;color:#000;font-weight:normal;transform:scaleX(0.9259);transform-origin:0 0;-webkit-text-stroke:0.1px #000;">Swanson</div>
<div class="t" style="left:340px;top:351.00px;font-size:9.72px;color:#000;font-weight:normal;transform:scaleX(0.9259);transform-origin:0 0;-webkit-text-stroke:0.1px #000;">Female</div>
<div class="t" style="left:428px;top:351.00px;font-size:9.72px;color:#000;font-weight:normal;transform:scaleX(0.9259);transform-origin:0 0;-webkit-text-stroke:0.1px #000;">17</div>
<div class="t" style="left:516px;top:351.00px;font-size:9.72px;color:#000;font-weight:normal;transform:scaleX(0.9259);transform-origin:0 0;-webkit-text-stroke:0.1px #000;">350000</div>
<div class="t" style="left:604px;top:351.00px;font-size:9.72px;color:#000;font-weight:normal;transform:scaleX(0.9259);transform-origin:0 0;-webkit-text-stroke:0.1px #000;">Wacky Street</div>
<div class="t" style="left:76px;top:375.00px;font-size:9.72px;color:#000;font-weight:normal;transform:scaleX(0.9259);transform-origin:0 0;-webkit-text-stroke:0.1px #000;">6</div>
<div class="t" style="left:164px;top:375.00px;font-size:9.72px;color:#000;font-weight:normal;transform:scaleX(0.9259);transform-origin:0 0;-webkit-text-stroke:0.1px #000;">Clara</div>
<div class="t" style="left:252px;top:375.00px;font-size:9.72px;color:#000;font-weight:normal;transform:scaleX(0.9259);transform-origin:0 0;-webkit-text-stroke:0.1px #000;">Webb</div>
<div class="t" style="left:340px;top:375.00px;font-size:9.72px;color:#000;font-weight:normal;transform:scaleX(0.9259);transform-origin:0 0;-webkit-text-stroke:0.1px #000;">Female</div>
<div class="t" style="left:428px;top:375.00px;font-size:9.72px;color:#000;font-weight:normal;transform:scaleX(0.9259);transform-origin:0 0;-webkit-text-stroke:0.1px #000;">18</div>
<div class="t" style="left:516px;top:375.00px;font-size:9.72px;color:#000;font-weight:normal;transform:scaleX(0.9259);transform-origin:0 0;-webkit-text-stroke:0.1px #000;">450000</div>
<div class="t" style="left:604px;top:375.00px;font-size:9.72px;color:#000;font-weight:normal;transform:scaleX(0.9259);transform-origin:0 0;-webkit-text-stroke:0.1px #000;">Spooner Street</div>
<div class="t" style="left:76px;top:399.00px;font-size:9.72px;color:#000;font-weight:normal;transform:scaleX(0.9259);transform-origin:0 0;-webkit-text-stroke:0.1px #000;">7</div>
<div class="t" style="left:164px;top:399.00px;font-size:9.72px;color:#000;font-weight:normal;transform:scaleX(0.9259);transform-origin:0 0;-webkit-text-stroke:0.1px #000;">Zack</div>
<div class="t" style="left:252px;top:399.00px;font-size:9.72px;color:#000;font-weight:normal;transform:scaleX(0.9259);transform-origin:0 0;-webkit-text-stroke:0.1px #000;">Norris</div>
<div class="t" style="left:340px;top:399.00px;font-size:9.72px;color:#000;font-weight:normal;transform:scaleX(0.9259);transform-origin:0 0;-webkit-text-stroke:0.1px #000;">Male</div>
<div class="t" style="left:428px;top:399.00px;font-size:9.72px;color:#000;font-weight:normal;transform:scaleX(0.9259);transform-origin:0 0;-webkit-text-stroke:0.1px #000;">19</div>
<div class="t" style="left:516px;top:399.00px;font-size:9.72px;color:#000;font-weight:normal;transform:scaleX(0.9259);transform-origin:0 0;-webkit-text-stroke:0.1px #000;">250000</div>
<div class="t" style="left:604px;top:399.00px;font-size:9.72px;color:#000;font-weight:normal;transform:scaleX(0.9259);transform-origin:0 0;-webkit-text-stroke:0.1px #000;">Blue Bay Avenue</div>
<div class="t" style="left:76px;top:423.00px;font-size:9.72px;color:#000;font-weight:normal;transform:scaleX(0.9259);transform-origin:0 0;-webkit-text-stroke:0.1px #000;">8</div>
<div class="t" style="left:164px;top:423.00px;font-size:9.72px;color:#000;font-weight:normal;transform:scaleX(0.9259);transform-origin:0 0;-webkit-text-stroke:0.1px #000;">Randall</div>
<div class="t" style="left:252px;top:423.00px;font-size:9.72px;color:#000;font-weight:normal;transform:scaleX(0.9259);transform-origin:0 0;-webkit-text-stroke:0.1px #000;">May</div>
<div class="t" style="left:340px;top:423.00px;font-size:9.72px;color:#000;font-weight:normal;transform:scaleX(0.9259);transform-origin:0 0;-webkit-text-stroke:0.1px #000;">Male</div>
<div class="t" style="left:428px;top:423.00px;font-size:9.72px;color:#000;font-weight:normal;transform:scaleX(0.9259);transform-origin:0 0;-webkit-text-stroke:0.1px #000;">18</div>
<div class="t" style="left:516px;top:423.00px;font-size:9.72px;color:#000;font-weight:normal;transform:scaleX(0.9259);transform-origin:0 0;-webkit-text-stroke:0.1px #000;">350000</div>
<div class="t" style="left:604px;top:423.00px;font-size:9.72px;color:#000;font-weight:normal;transform:scaleX(0.9259);transform-origin:0 0;-webkit-text-stroke:0.1px #000;">Golden Street</div>
<div class="t" style="left:76px;top:447.00px;font-size:9.72px;color:#000;font-weight:normal;transform:scaleX(0.9259);transform-origin:0 0;-webkit-text-stroke:0.1px #000;">9</div>
<div class="t" style="left:164px;top:447.00px;font-size:9.72px;color:#000;font-weight:normal;transform:scaleX(0.9259);transform-origin:0 0;-webkit-text-stroke:0.1px #000;">Jessica</div>
<div class="t" style="left:252px;top:447.00px;font-size:9.72px;color:#000;font-weight:normal;transform:scaleX(0.9259);transform-origin:0 0;-webkit-text-stroke:0.1px #000;">Cole</div>
<div class="t" style="left:340px;top:447.00px;font-size:9.72px;color:#000;font-weight:normal;transform:scaleX(0.9259);transform-origin:0 0;-webkit-text-stroke:0.1px #000;">Female</div>
<div class="t" style="left:428px;top:447.00px;font-size:9.72px;color:#000;font-weight:normal;transform:scaleX(0.9259);transform-origin:0 0;-webkit-text-stroke:0.1px #000;">17</div>
<div class="t" style="left:516px;top:447.00px;font-size:9.72px;color:#000;font-weight:normal;transform:scaleX(0.9259);transform-origin:0 0;-webkit-text-stroke:0.1px #000;">200000</div>
<div class="t" style="left:604px;top:447.00px;font-size:9.72px;color:#000;font-weight:normal;transform:scaleX(0.9259);transform-origin:0 0;-webkit-text-stroke:0.1px #000;">Mapple Street</div>
<div class="t" style="left:76px;top:471.00px;font-size:9.72px;color:#000;font-weight:normal;transform:scaleX(0.9259);transform-origin:0 0;-webkit-text-stroke:0.1px #000;">10</div>
<div class="t" style="left:164px;top:471.00px;font-size:9.72px;color:#000;font-weight:normal;transform:scaleX(0.9259);transform-origin:0 0;-webkit-text-stroke:0.1px #000;">Oscar</div>
<div class="t" style="left:252px;top:471.00px;font-size:9.72px;color:#000;font-weight:normal;transform:scaleX(0.9259);transform-origin:0 0;-webkit-text-stroke:0.1px #000;">Manning</div>
<div class="t" style="left:340px;top:471.00px;font-size:9.72px;color:#000;font-weight:normal;transform:scaleX(0.9259);transform-origin:0 0;-webkit-text-stroke:0.1px #000;">Male</div>
<div class="t" style="left:428px;top:471.00px;font-size:9.72px;color:#000;font-weight:normal;transform:scaleX(0.9259);transform-origin:0 0;-webkit-text-stroke:0.1px #000;">18</div>
<div class="t" style="left:516px;top:471.00px;font-size:9.72px;color:#000;font-weight:normal;transform:scaleX(0.9259);transform-origin:0 0;-webkit-text-stroke:0.1px #000;">700000</div>
<div class="t" style="left:604px;top:471.00px;font-size:9.72px;color:#000;font-weight:normal;transform:scaleX(0.9259);transform-origin:0 0;-webkit-text-stroke:0.1px #000;">Mapple Street</div>
<div style="position:absolute;left:712px;top:185px;width:18px;height:422px;background:#fff"></div>
<svg style="position:absolute;left:717px;top:191px;" width="10" height="6" viewBox="0 0 10 6" shape-rendering="crispEdges"><path d="M0 5.5 L5 0.5 L10 5.5 Z" fill="#a9a9a9"/></svg>
<div style="position:absolute;left:716px;top:204px;width:12px;height:187px;background:#dedede"></div>
<svg style="position:absolute;left:718px;top:597px;" width="10" height="6" viewBox="0 0 10 6" shape-rendering="crispEdges"><path d="M0 0.5 L5 5.5 L10 0.5 Z" fill="#a9a9a9"/></svg>
<div style="position:absolute;left:36px;top:606px;width:694px;height:18px;background:#fff"></div>
<div style="position:absolute;left:36px;top:606px;width:677px;height:1px;background:#e3e3e3"></div>
<div style="position:absolute;left:712px;top:185px;width:1px;height:422px;background:#e3e3e3"></div>
<div style="position:absolute;left:714px;top:608px;width:16px;height:16px;background:#efefef"></div>
<svg style="position:absolute;left:43px;top:612px;" width="6" height="9" viewBox="0 0 6 9" shape-rendering="crispEdges"><path d="M5.5 0 L0.5 4.5 L5.5 9 Z" fill="#a9a9a9"/></svg>
<div style="position:absolute;left:55px;top:610px;width:623px;height:12px;background:#dedede"></div>
<svg style="position:absolute;left:702px;top:612px;" width="6" height="9" viewBox="0 0 6 9" shape-rendering="crispEdges"><path d="M0.5 0 L5.5 4.5 L0.5 9 Z" fill="#a9a9a9"/></svg>
<div style="position:absolute;left:36px;top:624px;width:694px;height:28px;background:#2b579a"></div>
<svg style="position:absolute;left:44px;top:634px;" width="10" height="12" viewBox="0 0 10 12" shape-rendering="crispEdges"><rect x="0" y="0" width="3" height="12" fill="#8ea6cc"/><path d="M10 0 L3.5 6 L10 12 Z" fill="#8ea6cc"/></svg>
<svg style="position:absolute;left:71px;top:634px;" width="7" height="12" viewBox="0 0 7 12" shape-rendering="crispEdges"><path d="M7 0 L0 6 L7 12 Z" fill="#8ea6cc"/></svg>
<div class="t" style="left:93.5px;top:634.00px;font-size:12.32px;color:#fff;font-weight:normal;transform:scaleX(0.8929);transform-origin:0 0;">Page 1 of 1</div>
<svg style="position:absolute;left:168px;top:634px;" width="7" height="12" viewBox="0 0 7 12" shape-rendering="crispEdges"><path d="M0 0 L7 6 L0 12 Z" fill="#8ea6cc"/></svg>
<svg style="position:absolute;left:191px;top:634px;" width="10" height="12" viewBox="0 0 10 12" shape-rendering="crispEdges"><path d="M0 0 L6.5 6 L0 12 Z" fill="#8ea6cc"/><rect x="7" y="0" width="3" height="12" fill="#8ea6cc"/></svg>
<div style="position:absolute;left:453px;top:626px;width:1px;height:26px;background:#7e9cc8"></div>
<div style="position:absolute;left:458px;top:629px;width:22px;height:20px;background:#a9bfe2"></div>
<div style="position:absolute;left:465px;top:634px;width:9px;height:10px;background:#fff"></div>
<div style="position:absolute;left:487px;top:633px;width:10px;height:5px;background:#fff"></div>
<div style="position:absolute;left:487px;top:640px;width:10px;height:5px;background:#fff"></div>
<svg style="position:absolute;left:509px;top:634px;" width="11" height="10" viewBox="0 0 11 10" shape-rendering="crispEdges"><g fill="#fff"><rect x="0" y="0" width="4" height="4"/><rect x="6" y="0" width="4" height="4"/><rect x="0" y="6" width="4" height="4"/><rect x="6" y="6" width="4" height="4"/></g></svg>
<div class="t" style="left:544.5px;top:633.00px;font-size:12.88px;color:#fff;font-weight:normal;transform:scaleX(0.8929);transform-origin:0 0;">80%</div>
<div style="position:absolute;left:593px;top:638px;width:8px;height:2px;background:#fff"></div>
<div style="position:absolute;left:605px;top:639px;width:97px;height:1px;background:#6d8fc0"></div>
<div style="position:absolute;left:654px;top:634px;width:1px;height:9px;background:#6d8fc0"></div>
<div style="position:absolute;left:642px;top:633px;width:3px;height:11px;background:#fff"></div>
<div style="position:absolute;left:705px;top:638px;width:8px;height:2px;background:#fff"></div>
<div style="position:absolute;left:708px;top:635px;width:2px;height:8px;background:#fff"></div>
<div style="position:absolute;left:186px;top:654px;width:96px;height:20px;border:1px solid #d6d6d6;box-sizing:border-box;background:#fff"></div>
<div class="t" style="left:222.5px;top:658.00px;font-size:12.32px;color:#a0a0a0;font-weight:normal;transform:scaleX(0.8929);transform-origin:0 0;">Stop</div>
<div style="position:absolute;left:290px;top:654px;width:96px;height:20px;border:1px solid #a8a8a8;box-sizing:border-box;background:#fff"></div>
<div class="t" style="left:319.5px;top:658.00px;font-size:11.76px;color:#111;font-weight:normal;transform:scaleX(0.8929);transform-origin:0 0;">Refresh</div>
<div style="position:absolute;left:399px;top:657px;width:13px;height:13px;border:1px solid #a8a8a8;box-sizing:border-box;background:#fff"></div>
<svg style="position:absolute;left:401px;top:659px;" width="9" height="9" viewBox="0 0 9 9"><path d="M1 4.5 L3.5 7 L8 1" stroke="#555" stroke-width="1.2" fill="none"/></svg>
<div class="t" style="left:418.5px;top:659.00px;font-size:11.76px;color:#111;font-weight:normal;transform:scaleX(0.8929);transform-origin:0 0;">Auto Refresh</div>
<div style="position:absolute;left:734px;top:157px;width:299px;height:495px;border:1px solid #d0d0d0;border-bottom:none;box-sizing:border-box;background:#fff"></div>
<div class="t" style="left:741.5px;top:161.00px;font-size:12.32px;color:#a0a0a0;font-weight:normal;transform:scaleX(0.8929);transform-origin:0 0;">Dictionary</div>
<svg style="position:absolute;left:1003px;top:162px;" width="8" height="10" viewBox="0 0 8 10" shape-rendering="crispEdges"><rect x="1.5" y="0.5" width="5" height="5" fill="none" stroke="#8a8a8a"/><rect x="4" y="1" width="2" height="4" fill="#8a8a8a"/><rect x="0" y="5" width="8" height="1" fill="#8a8a8a"/><rect x="3" y="6" width="1" height="4" fill="#8a8a8a"/></svg>
<svg style="position:absolute;left:1020px;top:164px;" width="9" height="7" viewBox="0 0 9 7"><path d="M1 0.5 L8 6.5 M8 0.5 L1 6.5" stroke="#8a8a8a" stroke-width="1.3"/></svg>
<div style="position:absolute;left:737px;top:180px;width:293px;height:25px;border:1px solid #cfcfcf;box-sizing:border-box"></div>
<div class="t" style="left:744.5px;top:185.00px;font-size:13.44px;color:#111;font-weight:normal;transform:scaleX(0.8929);transform-origin:0 0;">Actions</div>
<svg style="position:absolute;left:795px;top:191px;" width="6" height="3" viewBox="0 0 6 3" shape-rendering="crispEdges"><path d="M0 0 H6 L3 3 Z" fill="#222"/></svg>
<svg style="position:absolute;left:808px;top:184px;" width="17" height="17" viewBox="0 0 17 17" shape-rendering="crispEdges"><rect x="0" y="0" width="7" height="7" fill="#eac15a"/><rect x="7" y="2" width="5" height="3" fill="#3d74c0"/><rect x="11" y="5" width="1" height="1" fill="#6a6a6a"/><rect x="2" y="7" width="1" height="5" fill="#6a6a6a"/><rect x="2" y="11" width="4" height="1" fill="#6a6a6a"/><rect x="4" y="8" width="2" height="1" fill="#8fb0dc"/><rect x="6.5" y="6.5" width="9" height="9" fill="#fff" stroke="#6a6a6a"/><rect x="6" y="6" width="10" height="3" fill="#3d74c0"/><rect x="8" y="10" width="2" height="1" fill="#8fb0dc"/><rect x="11" y="10" width="3" height="1" fill="#8fb0dc"/><rect x="8" y="12" width="2" height="1" fill="#8fb0dc"/><rect x="11" y="12" width="3" height="1" fill="#8fb0dc"/></svg>
<svg style="position:absolute;left:832px;top:191px;" width="5" height="3" viewBox="0 0 5 3" shape-rendering="crispEdges"><path d="M0 0 H5 L2.5 3 Z" fill="#111" shape-rendering="auto"/></svg>
<svg style="position:absolute;left:846px;top:185px;" width="15" height="15" viewBox="0 0 15 15"><rect x="0.5" y="1.5" width="11" height="11" fill="#fff" stroke="#6a6a6a"/><rect x="0" y="1" width="12" height="2" fill="#3d78c8"/><rect x="2" y="5" width="2" height="1" fill="#8fb0dc"/><rect x="4" y="5" width="3" height="1" fill="#8fb0dc"/><rect x="2" y="7" width="2" height="1" fill="#8fb0dc"/><path d="M3 11 L13 1" stroke="#fff" stroke-width="5.5"/><path d="M3.5 11 L13.5 1" stroke="#3d78c8" stroke-width="3"/><path d="M1 13.5 L2 10 L4.5 12.5 Z" fill="#3d78c8"/></svg>
<svg style="position:absolute;left:868px;top:184px;" width="18" height="17" viewBox="0 0 18 17"><path d="M1.5 3.5 C2.5 0.5 6 1.5 8 4.5 L15.5 14.5 L15 15 L6.5 7.5 C4.5 6 1.8 5.5 1.5 3.5 Z" fill="#e2572f"/><path d="M2.5 16 C0.8 15 1.5 12 4.5 9.5 L16.5 1.5 L17 2 L7 11.5 C5 14 4.5 16.5 2.5 16 Z" fill="#e2572f"/></svg>
<div style="position:absolute;left:890px;top:185px;width:1px;height:15px;background:#cfcfcf"></div>
<svg style="position:absolute;left:898px;top:188px;" width="11" height="8" viewBox="0 0 11 8"><path d="M0 5.2 L5.5 0 L11 5.2 Z" fill="#b9b9b9"/><rect x="3" y="5" width="5" height="3" fill="#b9b9b9"/></svg>
<svg style="position:absolute;left:922px;top:188px;" width="11" height="8" viewBox="0 0 11 8"><path d="M0 2.8 L5.5 8 L11 2.8 Z" fill="#b9b9b9"/><rect x="3" y="0" width="5" height="3" fill="#b9b9b9"/></svg>
<svg style="position:absolute;left:945px;top:183px;" width="16" height="17" viewBox="0 0 16 17"><text x="1" y="7.7" font-family="Liberation Sans" font-size="9" fill="#4a86c8">A</text><text x="1.3" y="15.8" font-family="Liberation Sans" font-size="9" fill="#9b4fc0">Z</text><path d="M11.5 1 V15.5 M8.8 12.5 L11.5 15.5 L14.2 12.5" stroke="#666" stroke-width="1.1" fill="none"/></svg>
<svg style="position:absolute;left:968px;top:191px;" width="5" height="3" viewBox="0 0 5 3" shape-rendering="crispEdges"><path d="M0 0 H5 L2.5 3 Z" fill="#111" shape-rendering="auto"/></svg>
<div style="position:absolute;left:748px;top:219px;width:1px;height:1px;background:#888"></div>
<div style="position:absolute;left:748px;top:221px;width:1px;height:1px;background:#888"></div>
<div style="position:absolute;left:748px;top:223px;width:1px;height:1px;background:#888"></div>
<div style="position:absolute;left:748px;top:225px;width:1px;height:1px;background:#888"></div>
<div style="position:absolute;left:748px;top:227px;width:1px;height:1px;background:#888"></div>
<div style="position:absolute;left:748px;top:229px;width:1px;height:1px;background:#888"></div>
<div style="position:absolute;left:748px;top:231px;width:1px;height:1px;background:#888"></div>
<div style="position:absolute;left:748px;top:233px;width:1px;height:1px;background:#888"></div>
<div style="position:absolute;left:748px;top:235px;width:1px;height:1px;background:#888"></div>
<div style="position:absolute;left:748px;top:237px;width:1px;height:1px;background:#888"></div>
<div style="position:absolute;left:748px;top:239px;width:1px;height:1px;background:#888"></div>
<div style="position:absolute;left:748px;top:241px;width:1px;height:1px;background:#888"></div>
<div style="position:absolute;left:748px;top:243px;width:1px;height:1px;background:#888"></div>
<div style="position:absolute;left:748px;top:245px;width:1px;height:1px;background:#888"></div>
<div style="position:absolute;left:748px;top:247px;width:1px;height:1px;background:#888"></div>
<div style="position:absolute;left:748px;top:249px;width:1px;height:1px;background:#888"></div>
<div style="position:absolute;left:748px;top:251px;width:1px;height:1px;background:#888"></div>
<div style="position:absolute;left:748px;top:253px;width:1px;height:1px;background:#888"></div>
<div style="position:absolute;left:748px;top:255px;width:1px;height:1px;background:#888"></div>
<div style="position:absolute;left:748px;top:257px;width:1px;height:1px;background:#888"></div>
<div style="position:absolute;left:748px;top:259px;width:1px;height:1px;background:#888"></div>
<div style="position:absolute;left:748px;top:261px;width:1px;height:1px;background:#888"></div>
<div style="position:absolute;left:748px;top:263px;width:1px;height:1px;background:#888"></div>
<div style="position:absolute;left:748px;top:265px;width:1px;height:1px;background:#888"></div>
<div style="position:absolute;left:748px;top:267px;width:1px;height:1px;background:#888"></div>
<div style="position:absolute;left:748px;top:269px;width:1px;height:1px;background:#888"></div>
<div style="position:absolute;left:748px;top:271px;width:1px;height:1px;background:#888"></div>
<div style="position:absolute;left:748px;top:273px;width:1px;height:1px;background:#888"></div>
<div style="position:absolute;left:748px;top:275px;width:1px;height:1px;background:#888"></div>
<div style="position:absolute;left:748px;top:277px;width:1px;height:1px;background:#888"></div>
<div style="position:absolute;left:748px;top:279px;width:1px;height:1px;background:#888"></div>
<div style="position:absolute;left:748px;top:281px;width:1px;height:1px;background:#888"></div>
<div style="position:absolute;left:748px;top:283px;width:1px;height:1px;background:#888"></div>
<div style="position:absolute;left:748px;top:285px;width:1px;height:1px;background:#888"></div>
<div style="position:absolute;left:748px;top:287px;width:1px;height:1px;background:#888"></div>
<div style="position:absolute;left:748px;top:289px;width:1px;height:1px;background:#888"></div>
<div style="position:absolute;left:748px;top:291px;width:1px;height:1px;background:#888"></div>
<div style="position:absolute;left:748px;top:293px;width:1px;height:1px;background:#888"></div>
<div style="position:absolute;left:748px;top:295px;width:1px;height:1px;background:#888"></div>
<div style="position:absolute;left:748px;top:297px;width:1px;height:1px;background:#888"></div>
<div style="position:absolute;left:748px;top:299px;width:1px;height:1px;background:#888"></div>
<div style="position:absolute;left:748px;top:301px;width:1px;height:1px;background:#888"></div>
<div style="position:absolute;left:748px;top:303px;width:1px;height:1px;background:#888"></div>
<div style="position:absolute;left:748px;top:305px;width:1px;height:1px;background:#888"></div>
<div style="position:absolute;left:748px;top:307px;width:1px;height:1px;background:#888"></div>
<div style="position:absolute;left:748px;top:309px;width:1px;height:1px;background:#888"></div>
<div style="position:absolute;left:748px;top:311px;width:1px;height:1px;background:#888"></div>
<div style="position:absolute;left:748px;top:313px;width:1px;height:1px;background:#888"></div>
<div style="position:absolute;left:748px;top:315px;width:1px;height:1px;background:#888"></div>
<div style="position:absolute;left:748px;top:317px;width:1px;height:1px;background:#888"></div>
<div style="position:absolute;left:748px;top:319px;width:1px;height:1px;background:#888"></div>
<div style="position:absolute;left:748px;top:321px;width:1px;height:1px;background:#888"></div>
<div style="position:absolute;left:748px;top:323px;width:1px;height:1px;background:#888"></div>
<div style="position:absolute;left:748px;top:325px;width:1px;height:1px;background:#888"></div>
<div style="position:absolute;left:748px;top:327px;width:1px;height:1px;background:#888"></div>
<div style="position:absolute;left:748px;top:329px;width:1px;height:1px;background:#888"></div>
<div style="position:absolute;left:748px;top:331px;width:1px;height:1px;background:#888"></div>
<div style="position:absolute;left:748px;top:333px;width:1px;height:1px;background:#888"></div>
<div style="position:absolute;left:748px;top:335px;width:1px;height:1px;background:#888"></div>
<div style="position:absolute;left:748px;top:337px;width:1px;height:1px;background:#888"></div>
<div style="position:absolute;left:748px;top:339px;width:1px;height:1px;background:#888"></div>
<div style="position:absolute;left:748px;top:341px;width:1px;height:1px;background:#888"></div>
<div style="position:absolute;left:748px;top:343px;width:1px;height:1px;background:#888"></div>
<div style="position:absolute;left:748px;top:345px;width:1px;height:1px;background:#888"></div>
<div style="position:absolute;left:748px;top:347px;width:1px;height:1px;background:#888"></div>
<div style="position:absolute;left:748px;top:349px;width:1px;height:1px;background:#888"></div>
<div style="position:absolute;left:748px;top:351px;width:1px;height:1px;background:#888"></div>
<div style="position:absolute;left:748px;top:353px;width:1px;height:1px;background:#888"></div>
<div style="position:absolute;left:748px;top:355px;width:1px;height:1px;background:#888"></div>
<div style="position:absolute;left:748px;top:357px;width:1px;height:1px;background:#888"></div>
<div style="position:absolute;left:748px;top:359px;width:1px;height:1px;background:#888"></div>
<div style="position:absolute;left:748px;top:361px;width:1px;height:1px;background:#888"></div>
<div style="position:absolute;left:748px;top:363px;width:1px;height:1px;background:#888"></div>
<div style="position:absolute;left:748px;top:365px;width:1px;height:1px;background:#888"></div>
<div style="position:absolute;left:748px;top:367px;width:1px;height:1px;background:#888"></div>
<div style="position:absolute;left:748px;top:369px;width:1px;height:1px;background:#888"></div>
<div style="position:absolute;left:748px;top:371px;width:1px;height:1px;background:#888"></div>
<div style="position:absolute;left:748px;top:373px;width:1px;height:1px;background:#888"></div>
<div style="position:absolute;left:748px;top:375px;width:1px;height:1px;background:#888"></div>
<div style="position:absolute;left:748px;top:377px;width:1px;height:1px;background:#888"></div>
<div style="position:absolute;left:748px;top:379px;width:1px;height:1px;background:#888"></div>
<div style="position:absolute;left:748px;top:381px;width:1px;height:1px;background:#888"></div>
<div style="position:absolute;left:748px;top:383px;width:1px;height:1px;background:#888"></div>
<div style="position:absolute;left:748px;top:385px;width:1px;height:1px;background:#888"></div>
<div style="position:absolute;left:748px;top:387px;width:1px;height:1px;background:#888"></div>
<div style="position:absolute;left:748px;top:389px;width:1px;height:1px;background:#888"></div>
<div style="position:absolute;left:748px;top:391px;width:1px;height:1px;background:#888"></div>
<div style="position:absolute;left:748px;top:393px;width:1px;height:1px;background:#888"></div>
<div style="position:absolute;left:748px;top:395px;width:1px;height:1px;background:#888"></div>
<div style="position:absolute;left:748px;top:397px;width:1px;height:1px;background:#888"></div>
<div style="position:absolute;left:748px;top:399px;width:1px;height:1px;background:#888"></div>
<div style="position:absolute;left:748px;top:401px;width:1px;height:1px;background:#888"></div>
<div style="position:absolute;left:748px;top:403px;width:1px;height:1px;background:#888"></div>
<div style="position:absolute;left:748px;top:405px;width:1px;height:1px;background:#888"></div>
<div style="position:absolute;left:748px;top:407px;width:1px;height:1px;background:#888"></div>
<div style="position:absolute;left:748px;top:409px;width:1px;height:1px;background:#888"></div>
<div style="position:absolute;left:748px;top:411px;width:1px;height:1px;background:#888"></div>
<div style="position:absolute;left:748px;top:413px;width:1px;height:1px;background:#888"></div>
<div style="position:absolute;left:748px;top:415px;width:1px;height:1px;background:#888"></div>
<div style="position:absolute;left:748px;top:417px;width:1px;height:1px;background:#888"></div>
<div style="position:absolute;left:748px;top:419px;width:1px;height:1px;background:#888"></div>
<div style="position:absolute;left:748px;top:421px;width:1px;height:1px;background:#888"></div>
<div style="position:absolute;left:748px;top:423px;width:1px;height:1px;background:#888"></div>
<div style="position:absolute;left:748px;top:425px;width:1px;height:1px;background:#888"></div>
<div style="position:absolute;left:748px;top:427px;width:1px;height:1px;background:#888"></div>
<div style="position:absolute;left:748px;top:429px;width:1px;height:1px;background:#888"></div>
<div style="position:absolute;left:748px;top:431px;width:1px;height:1px;background:#888"></div>
<div style="position:absolute;left:748px;top:433px;width:1px;height:1px;background:#888"></div>
<div style="position:absolute;left:748px;top:435px;width:1px;height:1px;background:#888"></div>
<div style="position:absolute;left:748px;top:437px;width:1px;height:1px;background:#888"></div>
<div style="position:absolute;left:754px;top:213px;width:1px;height:1px;background:#888"></div>
<div style="position:absolute;left:756px;top:213px;width:1px;height:1px;background:#888"></div>
<div style="position:absolute;left:758px;top:213px;width:1px;height:1px;background:#888"></div>
<div style="position:absolute;left:760px;top:213px;width:1px;height:1px;background:#888"></div>
<div style="position:absolute;left:767px;top:220px;width:1px;height:1px;background:#888"></div>
<div style="position:absolute;left:767px;top:222px;width:1px;height:1px;background:#888"></div>
<div style="position:absolute;left:767px;top:224px;width:1px;height:1px;background:#888"></div>
<div style="position:absolute;left:773px;top:229px;width:1px;height:1px;background:#888"></div>
<div style="position:absolute;left:775px;top:229px;width:1px;height:1px;background:#888"></div>
<div style="position:absolute;left:777px;top:229px;width:1px;height:1px;background:#888"></div>
<div style="position:absolute;left:786px;top:236px;width:1px;height:1px;background:#888"></div>
<div style="position:absolute;left:786px;top:238px;width:1px;height:1px;background:#888"></div>
<div style="position:absolute;left:786px;top:240px;width:1px;height:1px;background:#888"></div>
<div style="position:absolute;left:792px;top:245px;width:1px;height:1px;background:#888"></div>
<div style="position:absolute;left:794px;top:245px;width:1px;height:1px;background:#888"></div>
<div style="position:absolute;left:796px;top:245px;width:1px;height:1px;background:#888"></div>
<div style="position:absolute;left:798px;top:245px;width:1px;height:1px;background:#888"></div>
<div style="position:absolute;left:805px;top:252px;width:1px;height:1px;background:#888"></div>
<div style="position:absolute;left:805px;top:254px;width:1px;height:1px;background:#888"></div>
<div style="position:absolute;left:805px;top:256px;width:1px;height:1px;background:#888"></div>
<div style="position:absolute;left:805px;top:258px;width:1px;height:1px;background:#888"></div>
<div style="position:absolute;left:805px;top:260px;width:1px;height:1px;background:#888"></div>
<div style="position:absolute;left:805px;top:262px;width:1px;height:1px;background:#888"></div>
<div style="position:absolute;left:805px;top:264px;width:1px;height:1px;background:#888"></div>
<div style="position:absolute;left:805px;top:266px;width:1px;height:1px;background:#888"></div>
<div style="position:absolute;left:805px;top:268px;width:1px;height:1px;background:#888"></div>
<div style="position:absolute;left:805px;top:270px;width:1px;height:1px;background:#888"></div>
<div style="position:absolute;left:805px;top:272px;width:1px;height:1px;background:#888"></div>
<div style="position:absolute;left:805px;top:274px;width:1px;height:1px;background:#888"></div>
<div style="position:absolute;left:805px;top:276px;width:1px;height:1px;background:#888"></div>
<div style="position:absolute;left:805px;top:278px;width:1px;height:1px;background:#888"></div>
<div style="position:absolute;left:805px;top:280px;width:1px;height:1px;background:#888"></div>
<div style="position:absolute;left:805px;top:282px;width:1px;height:1px;background:#888"></div>
<div style="position:absolute;left:805px;top:284px;width:1px;height:1px;background:#888"></div>
<div style="position:absolute;left:805px;top:286px;width:1px;height:1px;background:#888"></div>
<div style="position:absolute;left:805px;top:288px;width:1px;height:1px;background:#888"></div>
<div style="position:absolute;left:805px;top:290px;width:1px;height:1px;background:#888"></div>
<div style="position:absolute;left:805px;top:292px;width:1px;height:1px;background:#888"></div>
<div style="position:absolute;left:805px;top:294px;width:1px;height:1px;background:#888"></div>
<div style="position:absolute;left:805px;top:296px;width:1px;height:1px;background:#888"></div>
<div style="position:absolute;left:805px;top:298px;width:1px;height:1px;background:#888"></div>
<div style="position:absolute;left:805px;top:300px;width:1px;height:1px;background:#888"></div>
<div style="position:absolute;left:805px;top:302px;width:1px;height:1px;background:#888"></div>
<div style="position:absolute;left:805px;top:304px;width:1px;height:1px;background:#888"></div>
<div style="position:absolute;left:805px;top:306px;width:1px;height:1px;background:#888"></div>
<div style="position:absolute;left:805px;top:308px;width:1px;height:1px;background:#888"></div>
<div style="position:absolute;left:805px;top:310px;width:1px;height:1px;background:#888"></div>
<div style="position:absolute;left:805px;top:312px;width:1px;height:1px;background:#888"></div>
<div style="position:absolute;left:805px;top:314px;width:1px;height:1px;background:#888"></div>
<div style="position:absolute;left:805px;top:316px;width:1px;height:1px;background:#888"></div>
<div style="position:absolute;left:805px;top:318px;width:1px;height:1px;background:#888"></div>
<div style="position:absolute;left:805px;top:320px;width:1px;height:1px;background:#888"></div>
<div style="position:absolute;left:805px;top:322px;width:1px;height:1px;background:#888"></div>
<div style="position:absolute;left:805px;top:324px;width:1px;height:1px;background:#888"></div>
<div style="position:absolute;left:805px;top:326px;width:1px;height:1px;background:#888"></div>
<div style="position:absolute;left:805px;top:328px;width:1px;height:1px;background:#888"></div>
<div style="position:absolute;left:805px;top:330px;width:1px;height:1px;background:#888"></div>
<div style="position:absolute;left:805px;top:332px;width:1px;height:1px;background:#888"></div>
<div style="position:absolute;left:805px;top:334px;width:1px;height:1px;background:#888"></div>
<div style="position:absolute;left:805px;top:336px;width:1px;height:1px;background:#888"></div>
<div style="position:absolute;left:805px;top:338px;width:1px;height:1px;background:#888"></div>
<div style="position:absolute;left:805px;top:340px;width:1px;height:1px;background:#888"></div>
<div style="position:absolute;left:805px;top:342px;width:1px;height:1px;background:#888"></div>
<div style="position:absolute;left:805px;top:344px;width:1px;height:1px;background:#888"></div>
<div style="position:absolute;left:805px;top:346px;width:1px;height:1px;background:#888"></div>
<div style="position:absolute;left:805px;top:348px;width:1px;height:1px;background:#888"></div>
<div style="position:absolute;left:805px;top:350px;width:1px;height:1px;background:#888"></div>
<div style="position:absolute;left:805px;top:352px;width:1px;height:1px;background:#888"></div>
<div style="position:absolute;left:805px;top:354px;width:1px;height:1px;background:#888"></div>
<div style="position:absolute;left:805px;top:356px;width:1px;height:1px;background:#888"></div>
<svg style="position:absolute;left:744px;top:209px;" width="9" height="9" viewBox="0 0 9 9" shape-rendering="crispEdges"><rect x="0.5" y="0.5" width="8" height="8" fill="#f4f4f4" stroke="#9a9a9a"/><rect x="2" y="4" width="5" height="1" fill="#3656a6"/></svg>
<svg style="position:absolute;left:761px;top:207px;" width="12" height="12" viewBox="0 0 12 12" shape-rendering="crispEdges"><rect x="0.5" y="0.5" width="11" height="11" fill="#fff" stroke="#7a7a7a"/><rect x="0" y="0" width="12" height="3" fill="#4a7cc0"/><path d="M2 4.5 H4 M5 4.5 H7 M8 4.5 H10 M2 6.5 H4 M5 6.5 H7 M8 6.5 H10 M2 8.5 H4 M5 8.5 H7 M8 8.5 H10" stroke="#8fb0dc"/></svg>
<div class="t" style="left:780.5px;top:207.00px;font-size:11.76px;color:#111;font-weight:normal;transform:scaleX(0.8929);transform-origin:0 0;">Data Sources</div>
<svg style="position:absolute;left:763px;top:225px;" width="9" height="9" viewBox="0 0 9 9" shape-rendering="crispEdges"><rect x="0.5" y="0.5" width="8" height="8" fill="#f4f4f4" stroke="#9a9a9a"/><rect x="2" y="4" width="5" height="1" fill="#3656a6"/></svg>
<svg style="position:absolute;left:780px;top:222px;" width="11" height="13" viewBox="0 0 11 13"><path d="M0 2.5 V10.5 C0 12.5 11 12.5 11 10.5 V2.5 Z" fill="#e9c27a"/><ellipse cx="5.5" cy="2.5" rx="5.5" ry="2.3" fill="#f1d397" stroke="#fff" stroke-width="0.6"/></svg>
<div class="t" style="left:799.5px;top:223.00px;font-size:11.76px;color:#111;font-weight:normal;transform:scaleX(0.8929);transform-origin:0 0;">MS SQL [MS SQL]</div>
<svg style="position:absolute;left:782px;top:241px;" width="9" height="9" viewBox="0 0 9 9" shape-rendering="crispEdges"><rect x="0.5" y="0.5" width="8" height="8" fill="#f4f4f4" stroke="#9a9a9a"/><rect x="2" y="4" width="5" height="1" fill="#3656a6"/></svg>
<svg style="position:absolute;left:799px;top:239px;" width="12" height="12" viewBox="0 0 12 12" shape-rendering="crispEdges"><rect x="0.5" y="0.5" width="11" height="11" fill="#fff" stroke="#7a7a7a"/><rect x="0" y="0" width="12" height="3" fill="#4a7cc0"/><path d="M2 4.5 H4 M5 4.5 H7 M8 4.5 H10 M2 6.5 H4 M5 6.5 H7 M8 6.5 H10 M2 8.5 H4 M5 8.5 H7 M8 8.5 H10" stroke="#8fb0dc"/></svg>
<div style="position:absolute;left:816px;top:237px;width:46px;height:16px;background:#ececec"></div>
<div class="t" style="left:818.5px;top:239.00px;font-size:11.76px;color:#111;font-weight:normal;transform:scaleX(0.8929);transform-origin:0 0;">Students</div>
<div style="position:absolute;left:806px;top:261px;width:1px;height:1px;background:#888"></div>
<div style="position:absolute;left:808px;top:261px;width:1px;height:1px;background:#888"></div>
<div style="position:absolute;left:810px;top:261px;width:1px;height:1px;background:#888"></div>
<div style="position:absolute;left:812px;top:261px;width:1px;height:1px;background:#888"></div>
<div style="position:absolute;left:814px;top:261px;width:1px;height:1px;background:#888"></div>
<svg style="position:absolute;left:817px;top:257px;" width="15" height="9" viewBox="0 0 15 9"><rect x="0.5" y="0.5" width="14" height="8" fill="#fff" stroke="#6a7fa5"/><text x="7.5" y="7.3" text-anchor="middle" font-family="Liberation Mono" font-size="7.5" font-weight="bold" fill="#223a6a" letter-spacing="-0.5">123</text></svg>
<div class="t" style="left:837px;top:255.00px;font-size:11.76px;color:#111;font-weight:normal;transform:scaleX(0.8929);transform-origin:0 0;">StudentID</div>
<div style="position:absolute;left:806px;top:277px;width:1px;height:1px;background:#888"></div>
<div style="position:absolute;left:808px;top:277px;width:1px;height:1px;background:#888"></div>
<div style="position:absolute;left:810px;top:277px;width:1px;height:1px;background:#888"></div>
<div style="position:absolute;left:812px;top:277px;width:1px;height:1px;background:#888"></div>
<div style="position:absolute;left:814px;top:277px;width:1px;height:1px;background:#888"></div>
<svg style="position:absolute;left:817px;top:273px;" width="15" height="9" viewBox="0 0 15 9"><rect x="0.5" y="0.5" width="14" height="8" fill="#fff" stroke="#6a7fa5"/><text x="7.5" y="7.3" text-anchor="middle" font-family="Liberation Mono" font-size="7.5" font-weight="bold" fill="#223a6a" letter-spacing="-0.5">abc</text></svg>
<div class="t" style="left:837px;top:271.00px;font-size:11.76px;color:#111;font-weight:normal;transform:scaleX(0.8929);transform-origin:0 0;">FirstName</div>
<div style="position:absolute;left:806px;top:293px;width:1px;height:1px;background:#888"></div>
<div style="position:absolute;left:808px;top:293px;width:1px;height:1px;background:#888"></div>
<div style="position:absolute;left:810px;top:293px;width:1px;height:1px;background:#888"></div>
<div style="position:absolute;left:812px;top:293px;width:1px;height:1px;background:#888"></div>
<div style="position:absolute;left:814px;top:293px;width:1px;height:1px;background:#888"></div>
<svg style="position:absolute;left:817px;top:289px;" width="15" height="9" viewBox="0 0 15 9"><rect x="0.5" y="0.5" width="14" height="8" fill="#fff" stroke="#6a7fa5"/><text x="7.5" y="7.3" text-anchor="middle" font-family="Liberation Mono" font-size="7.5" font-weight="bold" fill="#223a6a" letter-spacing="-0.5">abc</text></svg>
<div class="t" style="left:837px;top:287.00px;font-size:11.76px;color:#111;font-weight:normal;transform:scaleX(0.8929);transform-origin:0 0;">LastName</div>
<div style="position:absolute;left:806px;top:309px;width:1px;height:1px;background:#888"></div>
<div style="position:absolute;left:808px;top:309px;width:1px;height:1px;background:#888"></div>
<div style="position:absolute;left:810px;top:309px;width:1px;height:1px;background:#888"></div>
<div style="position:absolute;left:812px;top:309px;width:1px;height:1px;background:#888"></div>
<div style="position:absolute;left:814px;top:309px;width:1px;height:1px;background:#888"></div>
<svg style="position:absolute;left:817px;top:305px;" width="15" height="9" viewBox="0 0 15 9"><rect x="0.5" y="0.5" width="14" height="8" fill="#fff" stroke="#6a7fa5"/><text x="7.5" y="7.3" text-anchor="middle" font-family="Liberation Mono" font-size="7.5" font-weight="bold" fill="#223a6a" letter-spacing="-0.5">abc</text></svg>
<div class="t" style="left:837px;top:303.00px;font-size:11.76px;color:#111;font-weight:normal;transform:scaleX(0.8929);transform-origin:0 0;">Gender</div>
<div style="position:absolute;left:806px;top:325px;width:1px;height:1px;background:#888"></div>
<div style="position:absolute;left:808px;top:325px;width:1px;height:1px;background:#888"></div>
<div style="position:absolute;left:810px;top:325px;width:1px;height:1px;background:#888"></div>
<div style="position:absolute;left:812px;top:325px;width:1px;height:1px;background:#888"></div>
<div style="position:absolute;left:814px;top:325px;width:1px;height:1px;background:#888"></div>
<svg style="position:absolute;left:817px;top:321px;" width="15" height="9" viewBox="0 0 15 9"><rect x="0.5" y="0.5" width="14" height="8" fill="#fff" stroke="#6a7fa5"/><text x="7.5" y="7.3" text-anchor="middle" font-family="Liberation Mono" font-size="7.5" font-weight="bold" fill="#223a6a" letter-spacing="-0.5">123</text></svg>
<div class="t" style="left:837px;top:319.00px;font-size:11.76px;color:#111;font-weight:normal;transform:scaleX(0.8929);transform-origin:0 0;">Age</div>
<div style="position:absolute;left:806px;top:341px;width:1px;height:1px;background:#888"></div>
<div style="position:absolute;left:808px;top:341px;width:1px;height:1px;background:#888"></div>
<div style="position:absolute;left:810px;top:341px;width:1px;height:1px;background:#888"></div>
<div style="position:absolute;left:812px;top:341px;width:1px;height:1px;background:#888"></div>
<div style="position:absolute;left:814px;top:341px;width:1px;height:1px;background:#888"></div>
<svg style="position:absolute;left:817px;top:337px;" width="15" height="9" viewBox="0 0 15 9"><rect x="0.5" y="0.5" width="14" height="8" fill="#fff" stroke="#6a7fa5"/><text x="7.5" y="7.3" text-anchor="middle" font-family="Liberation Mono" font-size="7.5" font-weight="bold" fill="#223a6a" letter-spacing="-0.5">123</text></svg>
<div class="t" style="left:837px;top:335.00px;font-size:11.76px;color:#111;font-weight:normal;transform:scaleX(0.8929);transform-origin:0 0;">Salary</div>
<div style="position:absolute;left:806px;top:357px;width:1px;height:1px;background:#888"></div>
<div style="position:absolute;left:808px;top:357px;width:1px;height:1px;background:#888"></div>
<div style="position:absolute;left:810px;top:357px;width:1px;height:1px;background:#888"></div>
<div style="position:absolute;left:812px;top:357px;width:1px;height:1px;background:#888"></div>
<div style="position:absolute;left:814px;top:357px;width:1px;height:1px;background:#888"></div>
<svg style="position:absolute;left:817px;top:353px;" width="15" height="9" viewBox="0 0 15 9"><rect x="0.5" y="0.5" width="14" height="8" fill="#fff" stroke="#6a7fa5"/><text x="7.5" y="7.3" text-anchor="middle" font-family="Liberation Mono" font-size="7.5" font-weight="bold" fill="#223a6a" letter-spacing="-0.5">abc</text></svg>
<div class="t" style="left:837px;top:351.00px;font-size:11.76px;color:#111;font-weight:normal;transform:scaleX(0.8929);transform-origin:0 0;">Address</div>
<div style="position:absolute;left:750px;top:373px;width:1px;height:1px;background:#888"></div>
<div style="position:absolute;left:752px;top:373px;width:1px;height:1px;background:#888"></div>
<div style="position:absolute;left:754px;top:373px;width:1px;height:1px;background:#888"></div>
<div style="position:absolute;left:756px;top:373px;width:1px;height:1px;background:#888"></div>
<div style="position:absolute;left:758px;top:373px;width:1px;height:1px;background:#888"></div>
<div style="position:absolute;left:750px;top:389px;width:1px;height:1px;background:#888"></div>
<div style="position:absolute;left:752px;top:389px;width:1px;height:1px;background:#888"></div>
<div style="position:absolute;left:754px;top:389px;width:1px;height:1px;background:#888"></div>
<div style="position:absolute;left:756px;top:389px;width:1px;height:1px;background:#888"></div>
<div style="position:absolute;left:758px;top:389px;width:1px;height:1px;background:#888"></div>
<div style="position:absolute;left:754px;top:405px;width:1px;height:1px;background:#888"></div>
<div style="position:absolute;left:756px;top:405px;width:1px;height:1px;background:#888"></div>
<div style="position:absolute;left:758px;top:405px;width:1px;height:1px;background:#888"></div>
<div style="position:absolute;left:754px;top:421px;width:1px;height:1px;background:#888"></div>
<div style="position:absolute;left:756px;top:421px;width:1px;height:1px;background:#888"></div>
<div style="position:absolute;left:758px;top:421px;width:1px;height:1px;background:#888"></div>
<div style="position:absolute;left:750px;top:437px;width:1px;height:1px;background:#888"></div>
<div style="position:absolute;left:752px;top:437px;width:1px;height:1px;background:#888"></div>
<div style="position:absolute;left:754px;top:437px;width:1px;height:1px;background:#888"></div>
<div style="position:absolute;left:756px;top:437px;width:1px;height:1px;background:#888"></div>
<div style="position:absolute;left:758px;top:437px;width:1px;height:1px;background:#888"></div>
<svg style="position:absolute;left:759px;top:365px;" width="16" height="16" viewBox="0 0 16 16"><rect x="3" y="1" width="11" height="3" fill="#4a7cc0"/><path d="M0 5 L5 0 L10 5 L5 10 Z" fill="#e6c47a"/><path d="M9 6 L12 3 L15 6 L12 9 Z" fill="#9b59b6"/><path d="M3 8 V11 H7 M8 10 V14 H12" stroke="#7a7a7a" fill="none"/><path d="M9 12 L12 9 L15 12 L12 15 Z" fill="#3d7cc9"/></svg>
<div class="t" style="left:780.5px;top:367.00px;font-size:11.76px;color:#111;font-weight:normal;transform:scaleX(0.8929);transform-origin:0 0;">Business Objects</div>
<svg style="position:absolute;left:760px;top:385px;" width="16" height="9" viewBox="0 0 16 9"><rect x="0.5" y="0.5" width="15" height="8" fill="#fff" stroke="#8aa0c4"/><rect x="0" y="0" width="2" height="9" fill="#4a7cc0"/><text x="9" y="7.5" text-anchor="middle" font-family="Liberation Mono" font-size="8" font-weight="bold" fill="#2a3f66" letter-spacing="-0.8">VAR</text></svg>
<div class="t" style="left:780.5px;top:383.00px;font-size:11.76px;color:#111;font-weight:normal;transform:scaleX(0.8929);transform-origin:0 0;">Variables</div>
<svg style="position:absolute;left:744px;top:401px;" width="9" height="9" viewBox="0 0 9 9" shape-rendering="crispEdges"><rect x="0.5" y="0.5" width="8" height="8" fill="#f4f4f4" stroke="#9a9a9a"/><rect x="2" y="4" width="5" height="1" fill="#3656a6"/><rect x="4" y="2" width="1" height="5" fill="#3656a6"/></svg>
<svg style="position:absolute;left:760px;top:401px;" width="16" height="9" viewBox="0 0 16 9"><rect x="0.5" y="0.5" width="15" height="8" fill="#fff" stroke="#8aa0c4"/><rect x="0" y="0" width="2" height="9" fill="#4a7cc0"/><text x="9" y="7.5" text-anchor="middle" font-family="Liberation Mono" font-size="8" font-weight="bold" fill="#2a3f66" letter-spacing="0">Σ#</text></svg>
<div class="t" style="left:780.5px;top:399.00px;font-size:11.76px;color:#111;font-weight:normal;transform:scaleX(0.8929);transform-origin:0 0;">System Variables</div>
<svg style="position:absolute;left:744px;top:417px;" width="9" height="9" viewBox="0 0 9 9" shape-rendering="crispEdges"><rect x="0.5" y="0.5" width="8" height="8" fill="#f4f4f4" stroke="#9a9a9a"/><rect x="2" y="4" width="5" height="1" fill="#3656a6"/><rect x="4" y="2" width="1" height="5" fill="#3656a6"/></svg>
<svg style="position:absolute;left:759px;top:413px;" width="16" height="16" viewBox="0 0 16 16"><text x="1.5" y="12.5" font-family="Liberation Serif" font-style="italic" font-size="15" fill="#444">fx</text></svg>
<div class="t" style="left:780.5px;top:415.00px;font-size:11.76px;color:#111;font-weight:normal;transform:scaleX(0.8929);transform-origin:0 0;">Functions</div>
<svg style="position:absolute;left:759px;top:429px;" width="16" height="16" viewBox="0 0 16 16"><path d="M4.5 0.5 H11 L14.5 4 V15.5 H4.5 Z" fill="#fff" stroke="#7a7a7a"/><rect x="1.5" y="3.5" width="8" height="9" fill="#fff" stroke="#7a7a7a"/><rect x="3" y="6" width="5" height="1" fill="#4a7cc0"/><rect x="3" y="8" width="5" height="1" fill="#4a7cc0"/><rect x="3" y="10" width="5" height="1" fill="#4a7cc0"/></svg>
<div class="t" style="left:780.5px;top:431.00px;font-size:11.76px;color:#111;font-weight:normal;transform:scaleX(0.8929);transform-origin:0 0;">Resources</div>
<div style="position:absolute;left:740px;top:602px;width:13px;height:13px;border:1px solid #b5b5b5;box-sizing:border-box;background:#fff"></div>
<div class="t" style="left:758.5px;top:604.00px;font-size:11.76px;color:#111;font-weight:normal;transform:scaleX(0.8929);transform-origin:0 0;">Create Field on Double Click</div>
<div style="position:absolute;left:740px;top:618px;width:13px;height:13px;border:1px solid #b5b5b5;box-sizing:border-box;background:#fff"></div>
<div class="t" style="left:758.5px;top:620.00px;font-size:11.76px;color:#111;font-weight:normal;transform:scaleX(0.8929);transform-origin:0 0;">Create Label</div>
<div style="position:absolute;left:740px;top:634px;width:13px;height:13px;border:1px solid #b5b5b5;box-sizing:border-box;background:#fff"></div>
<div class="t" style="left:758.5px;top:636.00px;font-size:11.76px;color:#111;font-weight:normal;transform:scaleX(0.8929);transform-origin:0 0;">Use Aliases</div>
<svg style="position:absolute;left:741px;top:655px;" width="18" height="17" viewBox="0 0 18 17"><rect x="1.5" y="6.5" width="13" height="9" fill="#fff" stroke="#7a7a7a"/><rect x="3" y="9" width="4" height="1" fill="#8fb0dc"/><rect x="9" y="9" width="4" height="1" fill="#8fb0dc"/><rect x="3" y="11" width="4" height="1" fill="#8fb0dc"/><rect x="9" y="11" width="4" height="1" fill="#8fb0dc"/><rect x="3" y="13" width="4" height="1" fill="#8fb0dc"/><rect x="9" y="13" width="4" height="1" fill="#8fb0dc"/><path d="M15 1.5 L16.5 1.2 V7.5 L15 6 Z" fill="#4caa4c"/><path d="M2.5 7.5 C4.5 3.5 8.5 1 12.5 1 C15 1 15.5 3 14 4.5 C12 6.5 9 6 6.5 8.5 Z" fill="#eac84e" stroke="#a08040" stroke-width="0.7"/></svg>
<div class="t" style="left:765px;top:658.00px;font-size:11.42px;color:#111;font-weight:normal;transform:scaleX(0.8929);transform-origin:0 0;">Properties</div>
<div style="position:absolute;left:820px;top:652px;width:1px;height:22px;background:#d6d6d6"></div>
<div style="position:absolute;left:901px;top:652px;width:1px;height:22px;background:#d6d6d6"></div>
<div style="position:absolute;left:820px;top:672px;width:82px;height:2px;background:#2b579a"></div>
<svg style="position:absolute;left:826px;top:657px;" width="13" height="12" viewBox="0 0 13 12" shape-rendering="crispEdges"><rect x="4.5" y="0.5" width="8" height="8" fill="#fff" stroke="#6e6e6e"/><rect x="4" y="0" width="9" height="3" fill="#3d74c0"/><rect x="9" y="4" width="1" height="1" fill="#7f9fd0"/><rect x="9" y="6" width="1" height="1" fill="#7f9fd0"/><rect x="0.5" y="3.5" width="7" height="8" fill="#fff" stroke="#6e6e6e"/><rect x="0" y="3" width="8" height="3" fill="#3d74c0"/><rect x="2" y="7" width="1" height="1" fill="#7f9fd0"/><rect x="5" y="7" width="1" height="1" fill="#7f9fd0"/><rect x="2" y="9" width="1" height="1" fill="#7f9fd0"/><rect x="5" y="9" width="1" height="1" fill="#7f9fd0"/></svg>
<div class="t" style="left:847.5px;top:657.00px;font-size:11.76px;color:#3b5ea6;font-weight:normal;transform:scaleX(0.8929);transform-origin:0 0;">Dictionary</div>
<svg style="position:absolute;left:907px;top:656px;" width="14" height="14" viewBox="0 0 14 14" shape-rendering="crispEdges"><rect x="0.5" y="0.5" width="13" height="13" fill="#fff" stroke="#6e6e6e"/><rect x="2" y="2" width="5" height="2" fill="#3d74c0"/><rect x="4" y="4" width="1" height="1" fill="#3d74c0"/><rect x="4" y="6" width="1" height="1" fill="#3d74c0"/><rect x="4" y="8" width="1" height="1" fill="#3d74c0"/><rect x="4" y="10" width="1" height="1" fill="#3d74c0"/><rect x="6" y="6" width="1" height="1" fill="#3d74c0"/><rect x="6" y="10" width="1" height="1" fill="#3d74c0"/><rect x="8" y="5" width="5" height="2" fill="#3d74c0"/><rect x="8" y="9" width="5" height="2" fill="#3d74c0"/></svg>
<div class="t" style="left:929px;top:657.00px;font-size:12.32px;color:#111;font-weight:normal;transform:scaleX(0.8929);transform-origin:0 0;">Report Tree</div>
<div style="position:absolute;left:0px;top:677px;width:1040px;height:28px;background:#2b579a"></div>
<div class="t" style="left:12.5px;top:685.00px;font-size:12.88px;color:#fff;font-weight:normal;transform:scaleX(0.8929);transform-origin:0 0;">Inches</div>
<svg style="position:absolute;left:59px;top:690px;" width="6" height="3" viewBox="0 0 6 3" shape-rendering="crispEdges"><path d="M0 3 L3 0 L6 3 Z" fill="#fff"/></svg>
<div style="position:absolute;left:68px;top:682px;width:1px;height:16px;background:#bdb6c4"></div>
<svg style="position:absolute;left:79px;top:685px;" width="6" height="11" viewBox="0 0 6 11" shape-rendering="crispEdges"><path d="M0 0 L6 5.5 L0 11 Z" fill="#fff"/></svg>
<div class="t" style="left:95.5px;top:685.00px;font-size:12.77px;color:#fff;font-weight:normal;transform:scaleX(0.8929);transform-origin:0 0;">Check for Issues</div>
<div style="position:absolute;left:188px;top:682px;width:1px;height:16px;background:#bdb6c4"></div>
<div class="t" style="left:196px;top:685.00px;font-size:12.32px;color:#fff;font-weight:normal;transform:scaleX(0.8929);transform-origin:0 0;">Page1</div>
<div style="position:absolute;left:236px;top:682px;width:1px;height:16px;background:#bdb6c4"></div>
<div class="t" style="left:241px;top:685.00px;font-size:11.76px;color:#fff;font-weight:normal;transform:scaleX(0.8929);transform-origin:0 0;">X:0.00</div>
<div class="t" style="left:278.5px;top:685.00px;font-size:11.76px;color:#fff;font-weight:normal;transform:scaleX(0.8929);transform-origin:0 0;">Y:0.00</div>
<div class="t" style="left:315.5px;top:684.00px;font-size:13.1px;color:#fff;font-weight:normal;transform:scaleX(0.8929);transform-origin:0 0;">Width:7.72</div>
<div class="t" style="left:377.5px;top:685.00px;font-size:12.88px;color:#fff;font-weight:normal;transform:scaleX(0.8929);transform-origin:0 0;">Height:1.20</div>
<div style="position:absolute;left:738px;top:679px;width:1px;height:25px;background:#a9bde0"></div>
<svg style="position:absolute;left:746px;top:684px;" width="15" height="13" viewBox="0 0 15 13" shape-rendering="crispEdges"><rect x="0" y="0" width="15" height="13" fill="#fff"/><rect x="0.5" y="0.5" width="14" height="12" fill="none" stroke="#b8a88a"/><rect x="4" y="2" width="7" height="1" fill="#8fb0dc"/><rect x="4" y="4" width="7" height="1" fill="#8fb0dc"/><rect x="4" y="6" width="7" height="1" fill="#8fb0dc"/><rect x="4" y="8" width="7" height="1" fill="#8fb0dc"/><rect x="4" y="10" width="7" height="1" fill="#8fb0dc"/><path d="M1 6.5 L4 3.5 V9.5 Z M14 6.5 L11 3.5 V9.5 Z" fill="#4a7cc0"/></svg>
<svg style="position:absolute;left:769px;top:684px;" width="15" height="13" viewBox="0 0 15 13" shape-rendering="crispEdges"><rect x="0" y="0" width="15" height="13" fill="#fff"/><rect x="0.5" y="0.5" width="14" height="12" fill="none" stroke="#b8a88a"/><rect x="2" y="4" width="11" height="1" fill="#8fb0dc"/><rect x="2" y="6" width="11" height="1" fill="#8fb0dc"/><rect x="2" y="8" width="11" height="1" fill="#8fb0dc"/><path d="M7.5 1 L4.5 3.5 H10.5 Z M7.5 12 L4.5 9.5 H10.5 Z" fill="#4a7cc0"/></svg>
<svg style="position:absolute;left:791px;top:684px;" width="15" height="13" viewBox="0 0 15 13" shape-rendering="crispEdges"><rect x="0" y="0" width="15" height="13" fill="#fff"/><rect x="0.5" y="0.5" width="14" height="12" fill="none" stroke="#b8a88a"/><rect x="3.5" y="2.5" width="8" height="8" fill="none" stroke="#4a7cc0"/><rect x="5" y="4" width="5" height="1" fill="#8fb0dc"/><rect x="5" y="6" width="5" height="1" fill="#8fb0dc"/><rect x="5" y="8" width="5" height="1" fill="#8fb0dc"/></svg>
<svg style="position:absolute;left:813px;top:683px;" width="17" height="16" viewBox="0 0 17 16" shape-rendering="crispEdges"><path d="M0.5 0.5 H8 L11.5 4 V14.5 H0.5 Z" fill="#fff" stroke="#b8a88a"/><rect x="2" y="2" width="5" height="1" fill="#8fb0dc"/><rect x="2" y="4" width="8" height="1" fill="#8fb0dc"/><rect x="2" y="6" width="8" height="1" fill="#8fb0dc"/><rect x="2" y="8" width="8" height="1" fill="#8fb0dc"/><g fill="#c9a86a"><rect x="12" y="1" width="1" height="1"/><rect x="14" y="1" width="1" height="1"/><rect x="14" y="3" width="1" height="1"/><rect x="14" y="5" width="1" height="1"/><rect x="14" y="7" width="1" height="1"/><rect x="1" y="15" width="1" height="1"/></g><rect x="3" y="9" width="13" height="6" fill="#4a7cc0"/><text x="9.5" y="14.5" text-anchor="middle" font-family="Liberation Sans" font-size="6.5" font-weight="bold" fill="#fff" shape-rendering="auto">100</text></svg>
<div class="t" style="left:841px;top:685.00px;font-size:12.88px;color:#fff;font-weight:normal;transform:scaleX(0.8929);transform-origin:0 0;">75%</div>
<div style="position:absolute;left:880px;top:690px;width:8px;height:2px;background:#fff"></div>
<div style="position:absolute;left:892px;top:690px;width:97px;height:1px;background:#6d8fc0"></div>
<div style="position:absolute;left:941px;top:686px;width:1px;height:9px;background:#6d8fc0"></div>
<svg style="position:absolute;left:924px;top:685px;" width="8" height="11" viewBox="0 0 8 11" shape-rendering="crispEdges"><path d="M0 0 H8 V7 L4 11 L0 7 Z" fill="#fff"/></svg>
<div style="position:absolute;left:992px;top:690px;width:9px;height:2px;background:#fff"></div>
<div style="position:absolute;left:995px;top:687px;width:2px;height:8px;background:#fff"></div>
<svg style="position:absolute;left:1022px;top:691px;" width="12" height="12" viewBox="0 0 12 12" shape-rendering="crispEdges"><g fill="#e8edf5"><rect x="8" y="1" width="2" height="2"/><rect x="4" y="5" width="2" height="2"/><rect x="8" y="5" width="2" height="2"/><rect x="0" y="9" width="2" height="2"/><rect x="4" y="9" width="2" height="2"/><rect x="8" y="9" width="2" height="2"/></g></svg>
</body></html>
